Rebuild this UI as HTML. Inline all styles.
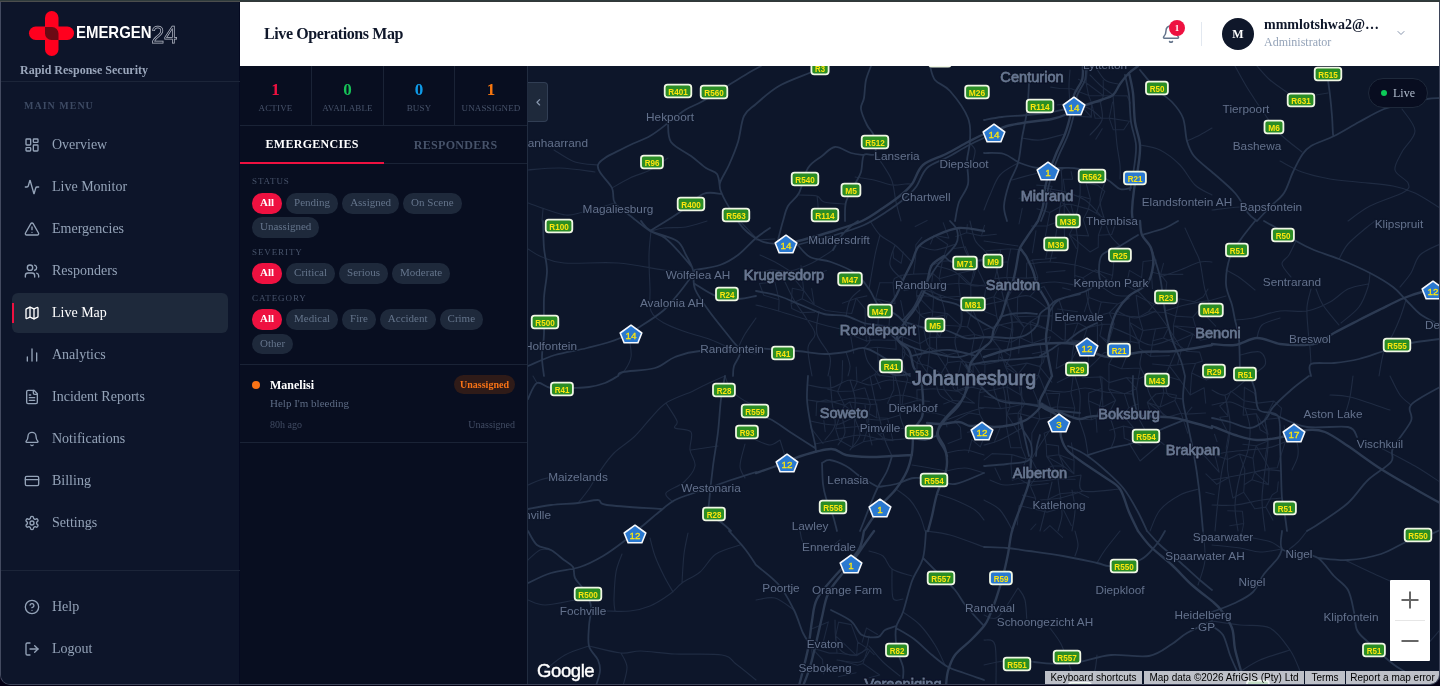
<!DOCTYPE html>
<html lang="en">
<head>
<meta charset="utf-8">
<title>Live Operations Map</title>
<style>
*{box-sizing:border-box;margin:0;padding:0}
html,body{width:1440px;height:686px;overflow:hidden;background:#030014;font-family:"Liberation Serif","Times New Roman",serif;}
#frame{position:absolute;left:0;top:0;width:1440px;height:686px;background:#030014;}
#topbar1{position:absolute;left:0;top:0;width:1440px;height:1px;background:#2f3b3c;}
#topbar2{position:absolute;left:0;top:1px;width:1440px;height:1px;background:linear-gradient(to right,#4b4d4d 0,#4b4d4d 240px,#323838 240px,#323838 100%);}
#win{position:absolute;left:0;top:2px;width:1440px;height:683px;border-left:1px solid #434a60;border-right:1px solid #3d4459;border-bottom:1px solid #3e455a;border-radius:0 0 10px 10px;overflow:hidden;background:#0d152a;}
#app{position:absolute;left:-1px;top:-2px;width:1440px;height:686px;will-change:transform;}
.abs{position:absolute}
#sidebar{position:absolute;left:0;top:0;width:240px;height:686px;background:#0d152a;border-right:1px solid #040920;}
#sidebar .hr{position:absolute;left:0;width:240px;height:1px;background:#1c2539;}
.navi{position:absolute;left:52px;font-size:14px;color:#94a3b8;line-height:18px;white-space:nowrap}
.navicon{position:absolute;left:24px;width:16px;height:16px;stroke:#94a3b8;fill:none;stroke-width:2;stroke-linecap:round;stroke-linejoin:round}
#active{position:absolute;left:12px;top:293px;width:216px;height:40px;background:#1e293b;border-radius:6px;}
#activebar{position:absolute;left:12px;top:303px;width:2px;height:20px;background:#ee1140;}
#header{position:absolute;left:240px;top:0;width:1200px;height:66px;background:#fff;}
#panel{position:absolute;left:240px;top:66px;width:288px;height:620px;background:#080e20;border-right:1px solid #212c40;}
.stat{position:absolute;top:0;height:59px;text-align:center;border-right:1px solid #1a2336}
.stat b{position:absolute;left:0;right:0;top:15px;font-size:17px;line-height:18px;font-weight:bold}
.stat span{position:absolute;left:0;right:0;top:36.5px;font-size:9px;line-height:11px;color:#47536a;letter-spacing:.15px}
.flabel{position:absolute;left:12px;font-size:9px;line-height:10px;letter-spacing:.9px;color:#47536a}
.chip{position:absolute;height:20.5px;border-radius:10.25px;background:#1e293b;color:#64748b;font-size:11px;line-height:16.5px;padding:1px 8px 3px;white-space:nowrap}
.chip.on{background:#ee1140;color:#fff;font-weight:bold}
#map{position:absolute;left:528px;top:66px;width:912px;height:620px;background:#0d162a;overflow:hidden}
.gm{position:absolute;font-family:"Liberation Sans",Arial,sans-serif;font-size:10px;line-height:14px;height:14px;color:#000;background:rgba(245,246,250,.76);white-space:nowrap;text-align:center;top:605px}
</style>
</head>
<body>
<div id="frame">
<div id="topbar1"></div><div id="topbar2"></div>
<div id="win"><div id="app">

<!-- SIDEBAR -->
<div id="sidebar">
  <svg class="abs" style="left:26px;top:8px" width="160" height="52" viewBox="26 8 160 52">
    <g fill="#ff001e">
      <rect x="45" y="11" width="13.5" height="45" rx="6.7"/>
      <rect x="29" y="26.5" width="45" height="13.5" rx="6.7"/>
    </g>
    <path d="M45 27 h7 a6.5 6.5 0 0 1 6.5 6.5 v6.5 h-7 a6.5 6.5 0 0 1 -6.5 -6.5 z" fill="#6b0a14"/>
    <text x="76" y="37.9" font-family="'Liberation Sans',Arial,sans-serif" font-weight="bold" font-size="16.4" fill="#fff" textLength="75.5" lengthAdjust="spacingAndGlyphs">EMERGEN</text>
    <text x="151.3" y="42.9" font-family="'Liberation Sans',Arial,sans-serif" font-size="24" fill="none" stroke="#b4b9c6" stroke-width="0.75" textLength="26" lengthAdjust="spacingAndGlyphs">24</text>
  </svg>
  <div class="abs" style="left:20px;top:63px;font-size:12px;line-height:14px;font-weight:bold;color:#9aa6bb;white-space:nowrap">Rapid Response Security</div>
  <div class="hr" style="top:81px"></div>
  <div class="abs" style="left:24px;top:100px;font-size:10px;line-height:12px;font-weight:bold;letter-spacing:1px;color:#3d4a63;white-space:nowrap">MAIN MENU</div>
  <div id="active"></div><div id="activebar"></div>

  <svg class="navicon" style="top:137px" viewBox="0 0 24 24"><rect x="3" y="3" width="7" height="9" rx="1"/><rect x="14" y="3" width="7" height="5" rx="1"/><rect x="14" y="12" width="7" height="9" rx="1"/><rect x="3" y="16" width="7" height="5" rx="1"/></svg>
  <div class="navi" style="top:136px">Overview</div>

  <svg class="navicon" style="top:179px" viewBox="0 0 24 24"><path d="M22 12h-2.48a2 2 0 0 0-1.93 1.46l-2.35 8.36a.25.25 0 0 1-.48 0L9.24 2.18a.25.25 0 0 0-.48 0l-2.35 8.36A2 2 0 0 1 4.49 12H2"/></svg>
  <div class="navi" style="top:178px">Live Monitor</div>

  <svg class="navicon" style="top:221px" viewBox="0 0 24 24"><path d="m21.73 18-8-14a2 2 0 0 0-3.48 0l-8 14A2 2 0 0 0 4 21h16a2 2 0 0 0 1.73-3"/><path d="M12 9v4"/><path d="M12 17h.01"/></svg>
  <div class="navi" style="top:220px">Emergencies</div>

  <svg class="navicon" style="top:263px" viewBox="0 0 24 24"><path d="M16 21v-2a4 4 0 0 0-4-4H6a4 4 0 0 0-4 4v2"/><circle cx="9" cy="7" r="4"/><path d="M22 21v-2a4 4 0 0 0-3-3.87"/><path d="M16 3.13a4 4 0 0 1 0 7.75"/></svg>
  <div class="navi" style="top:262px">Responders</div>

  <svg class="navicon" style="top:305px;stroke:#fff" viewBox="0 0 24 24"><path d="M14.106 5.553a2 2 0 0 0 1.788 0l3.659-1.83A1 1 0 0 1 21 4.619v12.764a1 1 0 0 1-.553.894l-4.553 2.277a2 2 0 0 1-1.788 0l-4.212-2.106a2 2 0 0 0-1.788 0l-3.659 1.83A1 1 0 0 1 3 19.381V6.618a1 1 0 0 1 .553-.894l4.553-2.277a2 2 0 0 1 1.788 0z"/><path d="M15 5.764v15"/><path d="M9 3.236v15"/></svg>
  <div class="navi" style="top:304px;color:#fff">Live Map</div>

  <svg class="navicon" style="top:347px" viewBox="0 0 24 24"><path d="M5 21v-6"/><path d="M12 21V3"/><path d="M19 21V9"/></svg>
  <div class="navi" style="top:346px">Analytics</div>

  <svg class="navicon" style="top:389px" viewBox="0 0 24 24"><path d="M15 2H6a2 2 0 0 0-2 2v16a2 2 0 0 0 2 2h12a2 2 0 0 0 2-2V7Z"/><path d="M14 2v4a2 2 0 0 0 2 2h4"/><path d="M10 9H8"/><path d="M16 13H8"/><path d="M16 17H8"/></svg>
  <div class="navi" style="top:388px">Incident Reports</div>

  <svg class="navicon" style="top:431px" viewBox="0 0 24 24"><path d="M10.268 21a2 2 0 0 0 3.464 0"/><path d="M3.262 15.326A1 1 0 0 0 4 17h16a1 1 0 0 0 .74-1.673C19.41 13.956 18 12.499 18 8A6 6 0 0 0 6 8c0 4.499-1.411 5.956-2.738 7.326"/></svg>
  <div class="navi" style="top:430px">Notifications</div>

  <svg class="navicon" style="top:473px" viewBox="0 0 24 24"><rect width="20" height="14" x="2" y="5" rx="2"/><line x1="2" x2="22" y1="10" y2="10"/></svg>
  <div class="navi" style="top:472px">Billing</div>

  <svg class="navicon" style="top:515px" viewBox="0 0 24 24"><path d="M12.22 2h-.44a2 2 0 0 0-2 2v.18a2 2 0 0 1-1 1.73l-.43.25a2 2 0 0 1-2 0l-.15-.08a2 2 0 0 0-2.73.73l-.22.38a2 2 0 0 0 .73 2.73l.15.1a2 2 0 0 1 1 1.72v.51a2 2 0 0 1-1 1.74l-.15.09a2 2 0 0 0-.73 2.73l.22.38a2 2 0 0 0 2.73.73l.15-.08a2 2 0 0 1 2 0l.43.25a2 2 0 0 1 1 1.73V20a2 2 0 0 0 2 2h.44a2 2 0 0 0 2-2v-.18a2 2 0 0 1 1-1.73l.43-.25a2 2 0 0 1 2 0l.15.08a2 2 0 0 0 2.73-.73l.22-.39a2 2 0 0 0-.73-2.73l-.15-.08a2 2 0 0 1-1-1.74v-.5a2 2 0 0 1 1-1.74l.15-.09a2 2 0 0 0 .73-2.73l-.22-.38a2 2 0 0 0-2.73-.73l-.15.08a2 2 0 0 1-2 0l-.43-.25a2 2 0 0 1-1-1.73V4a2 2 0 0 0-2-2z"/><circle cx="12" cy="12" r="3"/></svg>
  <div class="navi" style="top:514px">Settings</div>

  <div class="hr" style="top:570px"></div>

  <svg class="navicon" style="top:599px" viewBox="0 0 24 24"><circle cx="12" cy="12" r="10"/><path d="M9.09 9a3 3 0 0 1 5.83 1c0 2-3 3-3 3"/><path d="M12 17h.01"/></svg>
  <div class="navi" style="top:598px">Help</div>

  <svg class="navicon" style="top:641px" viewBox="0 0 24 24"><path d="M9 21H5a2 2 0 0 1-2-2V5a2 2 0 0 1 2-2h4"/><polyline points="16 17 21 12 16 7"/><line x1="21" x2="9" y1="12" y2="12"/></svg>
  <div class="navi" style="top:640px">Logout</div>
</div>

<!-- HEADER -->
<div id="header">
  <div class="abs" style="left:24px;top:24px;font-size:16px;line-height:20px;font-weight:bold;letter-spacing:-.4px;color:#0f172a;white-space:nowrap">Live Operations Map</div>
  <svg class="abs" style="left:921px;top:24px;fill:none;stroke:#64748b;stroke-width:1.8;stroke-linecap:round;stroke-linejoin:round" width="20" height="20" viewBox="0 0 24 24"><path d="M10.268 21a2 2 0 0 0 3.464 0"/><path d="M3.262 15.326A1 1 0 0 0 4 17h16a1 1 0 0 0 .74-1.673C19.41 13.956 18 12.499 18 8A6 6 0 0 0 6 8c0 4.499-1.411 5.956-2.738 7.326"/></svg>
  <div class="abs" style="left:929px;top:20px;width:16px;height:16px;border-radius:8px;background:#ee1140;color:#fff;font-size:9px;line-height:16px;font-weight:bold;text-align:center">1</div>
  <div class="abs" style="left:961px;top:22px;width:1px;height:24px;background:#e2e8f0"></div>
  <div class="abs" style="left:982px;top:18px;width:32px;height:32px;border-radius:16px;background:#0f172a;color:#fff;font-size:12px;line-height:32px;font-weight:bold;text-align:center">M</div>
  <div class="abs" style="left:1024px;top:16px;font-size:14px;line-height:17px;font-weight:bold;color:#0f172a;white-space:nowrap">mmmlotshwa2@…</div>
  <div class="abs" style="left:1024px;top:34.5px;font-size:12px;line-height:14px;color:#94a3b8;white-space:nowrap">Administrator</div>
  <svg class="abs" style="left:1155px;top:27px;fill:none;stroke:#8593ab;stroke-width:2;stroke-linecap:round;stroke-linejoin:round" width="12" height="12" viewBox="0 0 24 24"><path d="m6 9 6 6 6-6"/></svg>
</div>

<!-- PANEL -->
<div id="panel">
  <div class="stat" style="left:0;width:72px"><b style="color:#ee1140">1</b><span>ACTIVE</span></div>
  <div class="stat" style="left:72px;width:72px"><b style="color:#16c157">0</b><span>AVAILABLE</span></div>
  <div class="stat" style="left:144px;width:71px"><b style="color:#0f9be8">0</b><span>BUSY</span></div>
  <div class="stat" style="left:215px;width:72px;border-right:none"><b style="color:#f6760f">1</b><span>UNASSIGNED</span></div>
  <div class="abs" style="left:0;top:59px;width:287px;height:1px;background:#1a2336"></div>

  <div class="abs" style="left:0;top:60px;width:144px;height:36px;text-align:center;font-size:12px;line-height:36px;font-weight:bold;color:#fff;letter-spacing:.3px;text-indent:.3px">EMERGENCIES</div>
  <div class="abs" style="left:144px;top:61px;width:143px;height:36px;text-align:center;font-size:12px;line-height:36px;font-weight:bold;color:#47536a;letter-spacing:.3px;text-indent:.3px">RESPONDERS</div>
  <div class="abs" style="left:0;top:97px;width:287px;height:1px;background:#1a2336"></div>
  <div class="abs" style="left:0;top:96px;width:144px;height:2px;background:#ee1140"></div>

  <div class="flabel" style="top:110.25px">STATUS</div>
  <div class="abs" style="left:12px;top:127px;display:flex;gap:4px"><div class="chip on" style="position:static">All</div><div class="chip" style="position:static">Pending</div><div class="chip" style="position:static">Assigned</div><div class="chip" style="position:static">On Scene</div></div>
  <div class="abs" style="left:12px;top:151px;display:flex;gap:4px"><div class="chip" style="position:static">Unassigned</div></div>

  <div class="flabel" style="top:181px">SEVERITY</div>
  <div class="abs" style="left:12px;top:197px;display:flex;gap:4px"><div class="chip on" style="position:static">All</div><div class="chip" style="position:static">Critical</div><div class="chip" style="position:static">Serious</div><div class="chip" style="position:static">Moderate</div></div>

  <div class="flabel" style="top:227.25px">CATEGORY</div>
  <div class="abs" style="left:12px;top:243px;display:flex;gap:4px"><div class="chip on" style="position:static">All</div><div class="chip" style="position:static">Medical</div><div class="chip" style="position:static">Fire</div><div class="chip" style="position:static">Accident</div><div class="chip" style="position:static">Crime</div></div>
  <div class="abs" style="left:12px;top:267.5px;display:flex;gap:4px"><div class="chip" style="position:static">Other</div></div>

  <div class="abs" style="left:0;top:298px;width:287px;height:1px;background:#1a2336"></div>
  <div class="abs" style="left:12px;top:315px;width:8px;height:8px;border-radius:4px;background:#f97316"></div>
  <div class="abs" style="left:30px;top:311px;font-size:12px;line-height:16px;font-weight:bold;color:#fff;white-space:nowrap">Manelisi</div>
  <div class="abs" style="left:214px;top:309px;width:61px;height:19px;border-radius:9.5px;background:#2f1b18;color:#f97316;font-size:10px;line-height:19px;font-weight:bold;text-align:center">Unassigned</div>
  <div class="abs" style="left:30px;top:330px;font-size:11px;line-height:14px;color:#5d6b84;white-space:nowrap">Help I'm bleeding</div>
  <div class="abs" style="left:30px;top:353px;font-size:10px;line-height:12px;color:#414c63;white-space:nowrap">80h ago</div>
  <div class="abs" style="right:12px;top:353px;font-size:10px;line-height:12px;color:#414c63;white-space:nowrap">Unassigned</div>
  <div class="abs" style="left:0;top:376px;width:287px;height:1px;background:#1a2336"></div>
</div>

<div id="map">
<svg class="abs" style="left:0;top:0" width="912" height="620" viewBox="528 66 912 620">
<rect x="528" y="66" width="912" height="620" fill="#0d162a"/>
<path d="M759.4 283.5L774.9 282.2 M759.4 283.5L763.8 295.2 M763.8 295.2L779.1 299.8 M774.9 282.2L779.1 299.8 M779.1 299.8L778.7 310.7 M792.6 276.7L803.8 290.7 M792.3 288.3L803.8 290.7 M792.3 288.3L791.1 303.8 M791.1 303.8L802.1 298.8 M791.1 303.8L791.8 308.4 M791.8 308.4L800.5 312.6 M801.0 265.6L801.7 273.2 M801.7 273.2L814.0 274.5 M801.7 273.2L803.8 290.7 M803.8 290.7L802.1 298.8 M803.8 290.7L814.3 304.9 M802.1 298.8L814.3 304.9 M800.5 312.6L814.7 312.1 M814.0 274.5L826.5 270.4 M811.7 288.5L814.3 304.9 M814.3 304.9L825.7 310.5 M816.7 402.2L825.9 399.9 M816.7 402.2L816.1 415.6 M810.7 427.7L823.1 443.6 M812.1 628.7L828.3 621.9 M813.8 640.9L811.5 647.8 M811.5 647.8L829.3 653.1 M811.5 647.8L812.6 660.9 M811.5 647.8L822.5 659.5 M825.7 310.5L841.3 312.5 M827.7 389.1L837.6 391.5 M825.9 399.9L844.6 405.4 M823.8 420.5L825.2 431.6 M828.3 621.9L823.2 642.1 M829.3 653.1L837.0 653.0 M822.5 659.5L823.7 674.0 M842.4 303.3L856.2 298.2 M841.3 312.5L851.7 313.5 M842.6 360.5L842.0 381.0 M842.0 381.0L837.6 391.5 M837.6 391.5L852.9 391.0 M837.6 391.5L844.6 405.4 M844.6 405.4L849.6 402.0 M844.6 405.4L840.4 414.5 M844.6 405.4L853.8 412.9 M840.4 414.5L853.8 412.9 M840.4 414.5L835.6 428.6 M835.6 428.6L854.9 426.7 M835.6 428.6L839.1 440.0 M839.1 440.0L852.4 447.6 M838.6 622.1L851.3 624.6 M838.6 622.1L835.7 635.8 M835.7 635.8L837.0 653.0 M835.7 635.8L856.6 655.7 M837.0 653.0L856.6 655.7 M839.5 660.2L857.6 665.2 M838.3 676.7L856.1 672.7 M856.3 276.4L863.3 274.7 M856.2 298.2L866.9 295.9 M856.2 298.2L851.7 313.5 M856.2 298.2L865.1 308.8 M851.7 329.3L865.4 329.6 M850.4 334.5L866.5 341.1 M850.4 334.5L853.7 353.3 M856.2 367.0L857.0 382.4 M857.0 382.4L852.9 391.0 M852.9 391.0L864.9 387.8 M849.6 402.0L870.5 404.6 M849.6 402.0L853.8 412.9 M853.8 412.9L868.7 413.4 M853.8 412.9L854.9 426.7 M854.9 426.7L868.7 425.6 M854.9 426.7L852.4 447.6 M852.4 447.6L863.4 441.7 M851.3 624.6L857.7 642.0 M857.7 642.0L856.6 655.7 M857.7 642.0L867.7 648.6 M856.6 655.7L867.7 648.6 M857.6 665.2L863.0 663.5 M865.1 308.8L865.4 329.6 M865.4 329.6L877.9 324.6 M865.4 329.6L866.5 341.1 M866.5 341.1L874.1 339.8 M868.5 348.2L877.4 347.3 M862.1 381.3L874.5 374.5 M864.9 387.8L870.5 404.6 M870.5 404.6L876.8 404.0 M870.5 404.6L868.7 413.4 M868.7 413.4L876.6 417.7 M868.7 413.4L868.7 425.6 M868.7 425.6L879.3 434.5 M868.7 425.6L863.4 441.7 M863.4 441.7L883.9 438.4 M866.5 628.0L862.2 642.2 M866.5 628.0L877.5 634.4 M867.7 648.6L874.1 654.7 M867.7 648.6L863.0 663.5 M863.0 663.5L879.7 675.0 M869.3 677.8L879.7 675.0 M879.9 282.5L893.0 282.8 M879.9 282.5L875.7 298.6 M875.7 298.6L895.1 303.7 M875.7 298.6L878.7 313.8 M875.7 298.6L890.4 309.4 M878.7 313.8L877.9 324.6 M877.9 324.6L888.9 326.4 M874.1 339.8L895.7 340.4 M877.4 347.3L896.2 349.2 M877.4 347.3L878.6 369.8 M878.6 369.8L890.3 367.5 M878.6 369.8L874.5 374.5 M874.5 374.5L893.5 377.1 M874.5 374.5L880.7 388.8 M876.8 404.0L876.6 417.7 M876.6 417.7L887.5 418.2 M879.3 434.5L890.4 429.9 M879.3 434.5L883.9 438.4 M883.9 438.4L893.0 440.6 M893.0 251.6L893.5 258.0 M893.5 258.0L901.1 263.3 M894.3 278.6L900.7 275.4 M894.3 278.6L893.0 282.8 M893.0 282.8L895.1 303.7 M890.4 309.4L888.9 326.4 M888.9 326.4L909.4 327.3 M888.9 326.4L895.7 340.4 M895.7 340.4L896.2 349.2 M890.3 367.5L902.3 362.1 M890.3 367.5L893.5 377.1 M893.5 377.1L893.8 389.4 M893.8 389.4L887.6 403.2 M887.6 403.2L902.2 404.7 M887.5 418.2L890.4 429.9 M890.4 429.9L908.6 427.7 M890.4 429.9L893.0 440.6 M903.3 252.0L901.1 263.3 M900.7 275.4L913.5 274.1 M900.7 275.4L904.0 290.6 M904.0 290.6L917.1 287.6 M900.7 300.6L904.1 317.1 M904.1 317.1L909.4 327.3 M909.4 327.3L918.4 326.5 M909.4 327.3L902.3 336.5 M902.3 336.5L919.9 343.8 M902.3 336.5L902.7 351.3 M902.7 351.3L902.3 362.1 M902.7 351.3L917.0 363.2 M902.3 362.1L907.6 379.4 M907.6 379.4L903.0 395.9 M903.0 395.9L902.2 404.7 M902.2 404.7L917.1 400.5 M915.2 226.6L927.1 220.6 M921.8 237.3L915.8 244.8 M915.8 244.8L915.7 256.7 M915.7 256.7L913.5 274.1 M913.5 274.1L932.9 273.5 M917.1 287.6L930.8 289.9 M917.1 287.6L916.6 295.2 M916.6 295.2L933.6 296.5 M916.6 295.2L919.9 314.5 M916.6 295.2L932.8 311.7 M919.9 314.5L932.8 311.7 M919.9 314.5L918.4 326.5 M918.4 326.5L919.9 343.8 M919.9 343.8L929.7 337.4 M919.9 343.8L921.7 354.2 M921.7 354.2L929.8 347.2 M921.7 354.2L917.0 363.2 M917.0 363.2L928.0 365.7 M917.0 363.2L917.2 382.7 M916.9 389.9L933.2 388.8 M916.9 389.9L917.1 400.5 M917.1 400.5L929.3 401.4 M922.9 412.1L934.3 413.0 M919.1 434.2L932.3 433.5 M934.0 235.2L948.9 238.1 M934.0 235.2L930.5 243.9 M934.0 235.2L947.7 244.5 M930.0 265.9L942.4 261.2 M932.9 273.5L939.1 278.8 M932.9 273.5L930.8 289.9 M930.8 289.9L933.6 296.5 M930.8 289.9L942.2 297.6 M933.6 296.5L942.2 297.6 M933.6 296.5L932.8 311.7 M932.8 311.7L947.5 313.6 M932.8 311.7L931.2 323.4 M931.2 323.4L944.1 325.2 M931.2 323.4L929.7 337.4 M931.2 323.4L939.6 337.1 M929.7 337.4L939.6 337.1 M929.7 337.4L929.8 347.2 M929.8 347.2L947.6 355.0 M929.8 347.2L928.0 365.7 M928.0 365.7L926.6 374.8 M928.0 365.7L941.1 373.6 M926.6 374.8L941.1 373.6 M933.2 388.8L944.4 389.8 M934.3 413.0L944.8 415.7 M943.2 222.8L948.9 238.1 M947.7 244.5L942.4 261.2 M942.4 261.2L953.0 260.6 M942.4 261.2L939.1 278.8 M939.1 278.8L959.3 273.3 M939.1 278.8L941.8 284.7 M941.8 284.7L958.8 283.2 M942.2 297.6L960.2 296.3 M947.5 313.6L944.1 325.2 M947.5 313.6L961.3 326.3 M944.1 325.2L961.3 326.3 M944.1 325.2L939.6 337.1 M939.6 337.1L954.9 337.5 M947.6 355.0L959.5 352.0 M947.6 355.0L947.5 362.6 M947.5 362.6L961.2 361.0 M947.5 362.6L941.1 373.6 M941.1 373.6L956.8 381.6 M941.1 373.6L944.4 389.8 M944.4 389.8L958.0 391.4 M944.4 389.8L952.9 400.4 M943.6 403.9L952.9 400.4 M944.8 415.7L947.0 427.0 M948.1 443.6L961.2 438.4 M955.8 236.4L966.6 232.7 M954.3 248.5L965.4 246.9 M953.0 260.6L970.2 258.9 M959.3 273.3L973.9 269.9 M959.3 273.3L958.8 283.2 M959.3 273.3L970.8 284.4 M958.8 283.2L970.8 284.4 M958.8 283.2L960.2 296.3 M960.2 296.3L961.2 317.9 M961.2 317.9L961.3 326.3 M961.3 326.3L967.5 327.0 M961.3 326.3L954.9 337.5 M954.9 337.5L974.8 334.5 M959.5 352.0L971.2 353.9 M961.2 361.0L973.1 363.4 M961.2 361.0L956.8 381.6 M961.2 361.0L973.1 377.6 M956.8 381.6L958.0 391.4 M958.0 391.4L974.2 386.2 M958.0 391.4L974.4 403.1 M952.9 400.4L974.4 403.1 M954.7 420.9L969.1 412.9 M954.7 420.9L960.4 427.3 M960.4 427.3L961.2 438.4 M967.3 224.5L966.6 232.7 M966.6 232.7L981.4 235.9 M965.4 246.9L970.2 258.9 M970.2 258.9L973.9 269.9 M973.9 269.9L970.8 284.4 M970.8 284.4L986.1 286.2 M970.8 284.4L970.9 302.8 M970.9 302.8L984.0 299.6 M970.9 302.8L972.1 308.7 M972.1 308.7L967.5 327.0 M972.1 308.7L981.6 329.4 M967.5 327.0L974.8 334.5 M974.8 334.5L984.2 336.9 M974.8 334.5L971.2 353.9 M971.2 353.9L978.9 349.7 M971.2 353.9L973.1 363.4 M973.1 363.4L985.0 364.4 M973.1 363.4L973.1 377.6 M973.1 363.4L984.6 381.0 M973.1 377.6L984.6 381.0 M969.1 412.9L979.9 414.7 M967.5 432.3L987.5 428.6 M971.8 439.6L980.3 446.9 M971.8 439.6L968.5 452.4 M984.5 225.3L981.4 235.9 M981.4 235.9L996.4 234.2 M986.3 250.9L1000.7 249.5 M978.1 260.9L999.0 262.7 M978.1 260.9L978.2 270.2 M978.2 270.2L986.1 286.2 M986.1 286.2L998.1 288.9 M986.1 286.2L984.0 299.6 M984.0 299.6L993.8 296.7 M981.4 310.2L996.7 316.2 M981.6 329.4L984.2 336.9 M984.2 336.9L992.4 339.2 M984.2 336.9L978.9 349.7 M978.9 349.7L999.7 348.7 M978.9 349.7L985.0 364.4 M985.0 364.4L998.4 361.7 M985.0 364.4L984.6 381.0 M984.6 381.0L979.3 392.8 M979.3 392.8L994.0 389.8 M979.3 392.8L978.5 407.2 M978.5 407.2L1000.6 408.6 M978.5 407.2L979.9 414.7 M979.9 414.7L987.5 428.6 M987.5 428.6L1000.4 427.0 M987.5 428.6L980.3 446.9 M984.1 459.9L992.1 453.6 M1000.7 249.5L1010.7 248.8 M1000.7 249.5L999.0 262.7 M999.0 262.7L1008.0 261.7 M999.0 262.7L994.8 278.6 M994.8 278.6L1006.8 277.4 M998.1 288.9L1011.9 290.3 M998.1 288.9L993.8 296.7 M993.8 296.7L1005.6 301.7 M993.8 296.7L996.7 316.2 M996.7 316.2L998.9 324.5 M998.9 324.5L1012.9 329.9 M998.9 324.5L992.4 339.2 M992.4 339.2L1011.4 342.2 M992.4 339.2L999.7 348.7 M999.7 348.7L1010.5 355.7 M999.7 348.7L998.4 361.7 M999.7 348.7L1005.4 367.0 M994.1 373.6L1011.0 379.1 M994.1 373.6L994.0 389.8 M994.0 389.8L1006.8 386.7 M994.0 389.8L1000.6 408.6 M1000.6 408.6L1010.0 407.2 M1000.4 427.0L1006.3 426.0 M1000.4 427.0L994.2 442.4 M992.1 453.6L1012.0 454.6 M995.0 467.9L1000.6 479.7 M1010.7 248.8L1022.6 250.0 M1010.7 248.8L1008.0 261.7 M1008.0 261.7L1006.8 277.4 M1006.8 277.4L1026.4 278.1 M1006.8 277.4L1011.9 290.3 M1011.9 290.3L1024.2 289.2 M1011.9 290.3L1005.6 301.7 M1005.6 301.7L1011.5 313.0 M1011.5 313.0L1017.2 316.6 M1011.5 313.0L1012.9 329.9 M1011.5 313.0L1024.2 327.3 M1012.9 329.9L1011.4 342.2 M1011.4 342.2L1019.7 337.6 M1011.4 342.2L1010.5 355.7 M1010.5 355.7L1005.4 367.0 M1005.4 367.0L1026.9 363.1 M1005.4 367.0L1011.0 379.1 M1005.4 367.0L1017.5 374.8 M1011.0 379.1L1006.8 386.7 M1006.8 386.7L1020.6 394.9 M1006.8 386.7L1010.0 407.2 M1010.0 407.2L1025.0 403.6 M1010.0 407.2L1006.8 414.2 M1006.8 414.2L1018.1 413.1 M1006.8 414.2L1006.3 426.0 M1006.8 414.2L1018.6 432.7 M1006.3 426.0L1010.7 447.7 M1010.7 447.7L1021.7 447.8 M1012.0 454.6L1026.1 458.9 M1012.0 454.6L1011.0 464.8 M1011.0 464.8L1012.3 480.3 M1012.3 480.3L1018.3 478.1 M1019.0 198.3L1032.4 197.5 M1022.2 208.4L1019.0 224.0 M1026.7 263.4L1032.3 259.9 M1026.7 263.4L1026.4 278.1 M1026.4 278.1L1037.8 277.2 M1024.2 289.2L1017.7 297.1 M1017.7 297.1L1017.2 316.6 M1017.2 316.6L1039.7 316.0 M1017.2 316.6L1024.2 327.3 M1024.2 327.3L1030.4 321.5 M1024.2 327.3L1019.7 337.6 M1019.7 337.6L1032.4 343.3 M1019.7 337.6L1018.7 353.3 M1026.9 363.1L1039.3 366.4 M1026.9 363.1L1017.5 374.8 M1017.5 374.8L1039.1 375.7 M1017.5 374.8L1020.6 394.9 M1020.6 394.9L1025.0 403.6 M1025.0 403.6L1018.1 413.1 M1018.1 413.1L1039.7 419.1 M1018.1 413.1L1018.6 432.7 M1018.6 432.7L1021.7 447.8 M1021.7 447.8L1026.1 458.9 M1026.1 458.9L1031.1 458.8 M1026.1 458.9L1021.8 472.2 M1021.8 472.2L1038.8 473.1 M1018.3 478.1L1030.1 485.5 M1022.6 495.1L1035.6 498.2 M1019.1 505.5L1035.0 509.2 M1019.1 505.5L1017.3 525.0 M1036.7 185.1L1052.1 186.3 M1032.4 197.5L1050.1 191.4 M1036.9 208.7L1049.8 212.5 M1031.5 226.0L1047.3 225.7 M1036.0 230.7L1032.4 252.8 M1032.3 259.9L1045.6 259.0 M1032.3 259.9L1037.8 277.2 M1037.8 277.2L1036.3 289.4 M1036.3 289.4L1044.0 286.4 M1036.3 289.4L1030.4 296.0 M1039.7 316.0L1052.3 315.6 M1039.7 316.0L1030.4 321.5 M1030.4 321.5L1051.3 330.9 M1030.4 321.5L1032.4 343.3 M1032.4 343.3L1050.5 336.8 M1032.2 353.7L1045.5 351.1 M1039.3 366.4L1043.3 362.3 M1039.3 366.4L1051.8 382.2 M1039.1 375.7L1031.6 386.2 M1039.1 375.7L1046.3 393.7 M1031.6 386.2L1037.5 400.1 M1037.5 400.1L1050.7 407.9 M1037.5 400.1L1039.7 419.1 M1039.7 419.1L1050.9 417.3 M1039.7 419.1L1031.9 433.0 M1031.9 433.0L1031.7 443.1 M1031.7 443.1L1031.1 458.8 M1031.1 458.8L1038.8 473.1 M1038.8 473.1L1052.6 465.7 M1038.8 473.1L1030.1 485.5 M1030.1 485.5L1048.3 483.5 M1030.1 485.5L1035.6 498.2 M1035.6 498.2L1035.0 509.2 M1035.0 509.2L1047.1 512.1 M1035.9 524.0L1030.8 529.6 M1050.7 87.1L1059.6 88.5 M1050.3 172.9L1062.9 169.5 M1052.1 186.3L1050.1 191.4 M1050.1 191.4L1065.3 194.4 M1050.1 191.4L1064.3 204.4 M1049.8 212.5L1064.3 204.4 M1049.8 212.5L1047.3 225.7 M1047.3 225.7L1064.2 219.3 M1047.3 225.7L1044.8 239.4 M1047.4 250.0L1045.6 259.0 M1045.6 259.0L1056.2 257.9 M1046.5 272.3L1065.0 270.6 M1044.0 286.4L1052.8 301.5 M1052.8 301.5L1052.3 315.6 M1052.3 315.6L1051.3 330.9 M1051.3 330.9L1062.5 339.7 M1050.5 336.8L1045.5 351.1 M1045.5 351.1L1043.3 362.3 M1046.3 393.7L1059.7 393.2 M1046.3 393.7L1050.7 407.9 M1050.7 407.9L1057.4 406.8 M1050.7 407.9L1050.9 417.3 M1044.1 433.2L1061.2 426.2 M1044.1 433.2L1046.2 444.3 M1046.2 444.3L1058.5 445.9 M1046.2 444.3L1046.7 456.4 M1046.7 456.4L1058.9 454.8 M1046.7 456.4L1052.6 465.7 M1046.7 456.4L1063.6 466.3 M1052.6 465.7L1063.6 466.3 M1052.6 465.7L1058.0 479.2 M1048.4 499.3L1059.9 493.7 M1047.1 512.1L1062.4 507.7 M1049.9 525.6L1043.9 531.2 M1049.9 525.6L1062.6 537.3 M1059.6 88.5L1071.4 88.7 M1057.2 104.9L1077.6 102.2 M1063.3 179.0L1072.6 179.2 M1063.3 179.0L1065.3 194.4 M1065.3 194.4L1064.3 204.4 M1064.3 204.4L1070.8 204.2 M1064.3 204.4L1064.2 219.3 M1064.3 204.4L1075.5 222.1 M1064.2 219.3L1075.5 222.1 M1064.2 219.3L1064.5 238.0 M1064.5 238.0L1062.7 245.8 M1062.6 287.9L1070.5 290.0 M1057.5 309.0L1077.5 311.7 M1065.8 324.8L1078.0 322.9 M1062.5 339.7L1071.3 340.0 M1058.3 347.7L1056.2 368.5 M1056.2 368.5L1071.2 360.4 M1057.3 382.6L1073.4 374.4 M1059.7 393.2L1057.4 406.8 M1057.4 406.8L1074.8 408.3 M1057.4 406.8L1058.5 415.7 M1058.5 415.7L1061.2 426.2 M1058.5 445.9L1058.9 454.8 M1058.9 454.8L1074.1 460.4 M1058.9 454.8L1063.6 466.3 M1058.9 454.8L1073.9 473.9 M1063.6 466.3L1073.9 473.9 M1063.6 466.3L1058.0 479.2 M1058.0 479.2L1075.2 479.2 M1058.0 479.2L1059.9 493.7 M1059.9 493.7L1077.3 492.1 M1059.9 493.7L1062.4 507.7 M1062.4 507.7L1071.3 525.6 M1078.4 79.2L1086.1 82.8 M1071.4 88.7L1088.6 95.6 M1077.6 102.2L1091.4 117.1 M1069.9 115.7L1091.4 117.1 M1071.1 171.6L1072.6 179.2 M1078.8 195.8L1090.4 199.0 M1070.8 204.2L1088.5 209.1 M1070.8 204.2L1075.5 222.1 M1075.5 222.1L1069.3 234.7 M1069.3 234.7L1088.6 235.9 M1069.3 234.7L1076.4 248.4 M1069.3 234.7L1090.0 251.9 M1075.0 275.5L1082.8 277.9 M1078.0 322.9L1087.2 327.8 M1078.0 322.9L1071.3 340.0 M1071.3 340.0L1082.8 341.4 M1071.3 340.0L1078.0 347.9 M1078.0 347.9L1071.2 360.4 M1071.2 360.4L1073.4 374.4 M1073.4 374.4L1071.0 393.5 M1071.0 393.5L1074.8 408.3 M1074.8 408.3L1073.0 418.8 M1073.0 418.8L1091.5 419.8 M1071.4 442.8L1074.1 460.4 M1074.1 460.4L1073.9 473.9 M1077.3 492.1L1088.6 497.6 M1087.8 65.5L1086.1 82.8 M1086.1 82.8L1088.6 95.6 M1086.1 82.8L1103.5 95.7 M1088.6 95.6L1103.5 95.7 M1088.6 95.6L1091.5 102.7 M1091.5 102.7L1100.9 102.0 M1091.5 102.7L1091.4 117.1 M1091.5 102.7L1095.2 118.3 M1086.2 183.3L1097.7 185.1 M1086.2 183.3L1090.4 199.0 M1090.4 199.0L1088.5 209.1 M1088.5 209.1L1096.2 213.3 M1088.5 209.1L1083.2 219.5 M1083.2 219.5L1088.6 235.9 M1090.0 251.9L1098.2 247.2 M1082.8 277.9L1095.6 269.9 M1082.8 277.9L1087.7 283.9 M1087.7 283.9L1088.9 297.6 M1088.9 297.6L1101.2 301.9 M1088.9 297.6L1084.4 311.7 M1087.2 327.8L1102.3 324.4 M1087.2 327.8L1082.8 341.4 M1082.8 341.4L1088.2 351.7 M1088.2 351.7L1088.7 368.0 M1088.7 368.0L1095.6 361.6 M1082.2 377.8L1101.9 376.9 M1088.8 393.1L1102.1 388.3 M1088.8 393.1L1088.5 400.8 M1088.5 400.8L1102.9 407.0 M1088.5 400.8L1091.5 419.8 M1091.5 419.8L1096.0 417.9 M1103.2 80.0L1103.5 95.7 M1103.5 95.7L1117.3 95.7 M1103.5 95.7L1100.9 102.0 M1095.2 118.3L1109.2 118.1 M1102.2 128.8L1095.8 139.1 M1097.7 185.1L1104.8 191.3 M1104.8 191.3L1096.2 213.3 M1096.2 213.3L1104.6 218.5 M1104.6 218.5L1098.4 235.2 M1098.4 235.2L1111.7 234.5 M1098.4 235.2L1098.2 247.2 M1095.6 269.9L1112.6 275.4 M1095.6 269.9L1110.8 282.4 M1096.7 283.0L1110.8 282.4 M1101.2 301.9L1117.8 304.0 M1101.2 301.9L1097.7 315.9 M1097.7 315.9L1109.3 312.7 M1097.7 315.9L1102.3 324.4 M1102.3 324.4L1114.2 324.0 M1102.3 324.4L1099.9 335.9 M1099.9 335.9L1108.7 341.5 M1099.9 335.9L1115.7 351.4 M1104.2 352.6L1115.7 351.4 M1104.2 352.6L1095.6 361.6 M1101.9 376.9L1109.0 382.6 M1101.9 376.9L1102.1 388.3 M1102.1 388.3L1102.9 407.0 M1102.9 407.0L1115.6 400.4 M1096.0 417.9L1097.0 432.1 M1117.3 95.7L1127.1 95.9 M1112.6 102.0L1109.2 118.1 M1109.2 118.1L1129.4 121.2 M1109.2 118.1L1113.2 129.6 M1113.2 129.6L1123.7 129.7 M1115.1 224.7L1111.7 234.5 M1114.2 257.1L1112.6 275.4 M1112.6 275.4L1110.8 282.4 M1117.8 304.0L1129.2 298.5 M1117.8 304.0L1109.3 312.7 M1109.3 312.7L1129.4 316.4 M1109.3 312.7L1114.2 324.0 M1114.2 324.0L1108.7 341.5 M1108.7 341.5L1130.3 341.4 M1115.7 351.4L1127.7 353.5 M1115.7 351.4L1108.9 364.0 M1108.9 364.0L1121.5 368.7 M1108.9 364.0L1109.0 382.6 M1109.0 382.6L1126.5 377.6 M1109.0 382.6L1108.6 388.9 M1108.6 388.9L1124.4 393.8 M1108.6 388.9L1115.6 400.4 M1115.6 400.4L1109.1 412.8 M1109.7 430.3L1123.5 426.1 M1127.1 95.9L1130.5 103.3 M1129.4 121.2L1123.7 129.7 M1129.4 270.4L1141.6 277.6 M1129.4 270.4L1126.4 285.4 M1126.4 285.4L1137.6 291.2 M1129.4 316.4L1139.0 316.9 M1129.4 316.4L1129.7 322.4 M1129.7 322.4L1143.0 330.5 M1129.7 322.4L1130.3 341.4 M1129.7 322.4L1139.1 343.3 M1130.3 341.4L1139.1 343.3 M1130.3 341.4L1127.7 353.5 M1127.7 353.5L1121.5 368.7 M1121.5 368.7L1140.3 368.0 M1126.5 377.6L1138.2 379.0 M1126.5 377.6L1136.6 388.8 M1124.4 393.8L1136.6 388.8 M1124.4 393.8L1128.8 407.7 M1128.8 407.7L1138.2 404.1 M1128.8 407.7L1123.2 415.4 M1123.2 415.4L1138.7 413.0 M1123.2 415.4L1134.1 428.4 M1123.5 426.1L1134.1 428.4 M1123.5 426.1L1124.3 438.3 M1124.3 438.3L1141.1 445.5 M1143.1 261.5L1156.2 260.0 M1143.1 261.5L1141.6 277.6 M1136.1 295.3L1154.3 304.4 M1136.1 295.3L1139.0 316.9 M1139.0 316.9L1148.5 311.7 M1139.0 316.9L1143.0 330.5 M1143.0 330.5L1155.5 328.9 M1143.0 330.5L1139.1 343.3 M1139.1 343.3L1139.6 348.5 M1139.6 348.5L1150.4 356.4 M1140.3 368.0L1138.2 379.0 M1138.2 379.0L1148.9 374.2 M1138.2 379.0L1136.6 388.8 M1136.6 388.8L1138.2 404.1 M1138.2 404.1L1138.7 413.0 M1156.2 260.0L1151.3 272.0 M1151.3 272.0L1160.6 274.3 M1151.3 272.0L1152.5 288.6 M1154.3 304.4L1164.4 302.9 M1154.3 304.4L1148.5 311.7 M1148.5 311.7L1165.7 312.5 M1155.5 328.9L1168.8 327.0 M1155.5 328.9L1152.9 340.8 M1152.9 340.8L1163.4 338.0 M1152.9 340.8L1150.4 356.4 M1150.4 356.4L1169.4 355.6 M1152.5 364.0L1169.1 365.6 M1148.9 374.2L1161.5 374.8 M1155.9 394.0L1163.8 392.9 M1155.9 394.0L1147.3 402.3 M1147.3 402.3L1160.1 407.0 M1147.3 402.3L1151.8 417.0 M1147.3 402.3L1167.8 417.1 M1150.7 433.9L1164.2 444.7 M1163.5 263.3L1160.6 274.3 M1160.6 274.3L1182.8 274.4 M1160.6 274.3L1166.8 282.4 M1166.8 282.4L1164.4 302.9 M1164.4 302.9L1179.4 298.8 M1164.4 302.9L1165.7 312.5 M1165.7 312.5L1175.5 316.1 M1168.8 327.0L1163.4 338.0 M1163.4 338.0L1173.9 342.5 M1169.1 365.6L1177.6 364.7 M1169.1 365.6L1180.2 380.3 M1161.5 374.8L1180.2 380.3 M1161.5 374.8L1163.8 392.9 M1163.8 392.9L1176.5 395.3 M1163.8 392.9L1160.1 407.0 M1160.1 407.0L1174.9 400.4 M1167.8 417.1L1181.1 413.2 M1179.4 298.8L1194.3 301.7 M1179.4 298.8L1175.5 316.1 M1175.5 316.1L1192.8 317.2 M1175.5 316.1L1173.4 325.8 M1173.4 325.8L1195.9 327.8 M1173.4 325.8L1173.9 342.5 M1173.4 325.8L1193.1 334.1 M1173.9 342.5L1193.1 334.1 M1173.9 342.5L1181.9 347.4 M1181.9 347.4L1186.5 351.3 M1181.9 347.4L1177.6 364.7 M1177.6 364.7L1195.6 363.2 M1180.2 380.3L1190.2 395.0 M1176.5 395.3L1174.9 400.4 M1174.9 400.4L1181.1 413.2 M1181.1 413.2L1186.2 414.1 M1181.1 413.2L1187.8 433.3 M1194.3 301.7L1203.3 296.7 M1192.8 317.2L1199.5 309.3 M1192.8 317.2L1195.9 327.8 M1193.1 334.1L1200.6 340.2 M1193.1 334.1L1186.5 351.3 M1186.5 351.3L1199.6 352.1 M1195.6 363.2L1202.4 361.1 M1195.6 363.2L1191.7 373.1 M1191.7 373.1L1206.4 380.1 M1191.7 373.1L1190.2 395.0 M1190.2 395.0L1204.1 387.7 M1191.9 407.2L1186.2 414.1 M1186.2 414.1L1205.6 413.0 M1208.0 289.0L1203.3 296.7 M1199.5 309.3L1216.8 311.4 M1199.5 309.3L1215.8 326.1 M1200.6 340.2L1217.9 336.3 M1199.6 352.1L1202.4 361.1 M1206.4 380.1L1218.6 374.9 M1204.1 387.7L1205.7 403.3 M1201.0 451.9L1219.1 472.1 M1205.9 473.9L1216.8 484.3 M1205.7 492.3L1214.2 494.5 M1219.7 406.0L1226.3 401.2 M1219.7 406.0L1228.1 416.2 M1219.8 417.2L1228.1 416.2 M1219.8 417.2L1228.6 434.0 M1214.5 434.2L1217.1 441.8 M1214.9 455.0L1227.4 459.5 M1214.9 455.0L1219.1 472.1 M1216.8 484.3L1228.8 477.4 M1231.0 391.1L1226.3 401.2 M1231.0 391.1L1244.1 400.8 M1226.3 401.2L1228.1 416.2 M1228.6 434.0L1226.2 447.8 M1226.2 447.8L1227.4 459.5 M1227.4 459.5L1239.4 454.1 M1227.4 459.5L1227.5 469.9 M1227.5 469.9L1228.8 477.4 M1228.8 477.4L1232.9 498.1 M1232.9 498.1L1243.7 492.3 M1227.7 510.7L1242.4 511.3 M1229.8 525.8L1243.7 523.5 M1244.4 387.4L1254.5 393.3 M1244.4 387.4L1244.1 400.8 M1244.1 400.8L1257.6 403.1 M1244.1 400.8L1243.1 415.2 M1243.1 415.2L1256.2 413.6 M1242.8 444.2L1256.1 445.8 M1239.4 454.1L1253.0 458.2 M1239.4 454.1L1244.8 469.5 M1244.8 469.5L1244.2 484.8 M1244.2 484.8L1252.0 479.8 M1244.2 484.8L1243.7 492.3 M1243.7 492.3L1254.8 508.8 M1242.4 511.3L1243.7 523.5 M1243.7 523.5L1241.7 533.5 M1254.5 393.3L1257.6 403.1 M1257.6 403.1L1273.9 401.1 M1256.2 413.6L1260.1 429.7 M1256.2 413.6L1268.1 434.3 M1260.1 429.7L1268.1 434.3 M1256.1 445.8L1267.9 441.1 M1256.1 445.8L1253.0 458.2 M1256.1 445.8L1264.8 460.4 M1253.0 458.2L1254.6 472.1 M1254.6 472.1L1269.1 468.4 M1254.6 472.1L1252.0 479.8 M1254.6 472.1L1268.4 484.7 M1252.0 479.8L1268.4 484.7 M1254.8 508.8L1265.8 507.1 M1273.9 401.1L1281.5 408.1 M1273.9 401.1L1264.4 419.5 M1264.4 419.5L1280.1 417.9 M1264.4 419.5L1268.1 434.3 M1267.9 441.1L1264.8 460.4 M1264.8 460.4L1269.1 468.4 M1269.1 468.4L1277.3 467.8 M1269.1 468.4L1268.4 484.7 M1272.3 494.8L1277.2 491.6 M1272.3 494.8L1265.8 507.1 M1265.8 507.1L1272.9 520.1 M1281.5 408.1L1280.1 417.9 M1284.1 425.7L1286.2 439.1 M1286.2 439.1L1280.0 458.1 M1280.0 458.1L1277.3 467.8 M1278.3 481.7L1277.2 491.6" fill="none" stroke="#1d2940" stroke-width="1.1" stroke-linecap="round"/>
<path d="M554.0 150.0 C557.5 152.0 567.7 159.5 575.0 162.0 C582.3 164.5 594.2 164.5 598.0 165.0 M528.0 203.0 C530.8 204.0 538.7 207.0 545.0 209.0 C551.3 211.0 559.7 214.5 566.0 215.0 C572.3 215.5 574.8 214.0 583.0 212.0 C591.2 210.0 609.7 204.5 615.0 203.0 M543.0 209.0 L542.0 221.0 M528.0 170.0 C533.3 169.7 548.8 167.7 560.0 168.0 C571.2 168.3 589.2 171.3 595.0 172.0 M612.0 188.0 C615.0 186.3 623.7 181.0 630.0 178.0 C636.3 175.0 643.7 173.3 650.0 170.0 C656.3 166.7 665.0 160.0 668.0 158.0 M855.0 177.0 C858.2 177.5 867.8 178.7 874.0 180.0 C880.2 181.3 886.8 184.3 892.0 185.0 C897.2 185.7 901.7 184.2 905.0 184.0 C908.3 183.8 910.8 184.0 912.0 184.0 M875.0 154.0 C876.3 155.8 880.2 160.5 883.0 165.0 C885.8 169.5 889.8 174.8 892.0 181.0 C894.2 187.2 894.5 195.3 896.0 202.0 C897.5 208.7 900.2 217.8 901.0 221.0 M799.0 195.0 C802.0 195.2 812.8 194.8 817.0 196.0 C821.2 197.2 819.3 200.7 824.0 202.0 C828.7 203.3 841.5 203.7 845.0 204.0 M817.0 196.0 C817.2 198.0 818.3 203.8 818.0 208.0 C817.7 212.2 815.5 218.8 815.0 221.0 M968.0 142.0 C969.2 143.3 974.3 146.2 975.0 150.0 C975.7 153.8 972.5 162.5 972.0 165.0 M1113.0 95.0 C1113.3 99.5 1114.3 113.7 1115.0 122.0 C1115.7 130.3 1116.2 137.8 1117.0 145.0 C1117.8 152.2 1119.5 159.3 1120.0 165.0 C1120.5 170.7 1120.0 176.7 1120.0 179.0 M1070.0 70.0 C1069.8 73.2 1068.8 81.8 1069.0 89.0 C1069.2 96.2 1070.7 109.0 1071.0 113.0 M1083.0 106.0 C1084.5 106.7 1089.0 108.0 1092.0 110.0 C1095.0 112.0 1099.5 116.7 1101.0 118.0 M1090.0 75.0 C1091.7 76.7 1096.2 81.7 1100.0 85.0 C1103.8 88.3 1110.8 93.3 1113.0 95.0 M1095.0 66.0 C1096.7 68.3 1101.2 77.0 1105.0 80.0 C1108.8 83.0 1115.8 83.3 1118.0 84.0 M1100.0 100.0 C1100.3 103.3 1103.7 114.2 1102.0 120.0 C1100.3 125.8 1092.0 132.5 1090.0 135.0 M1050.0 170.0 C1046.7 170.8 1036.3 173.3 1030.0 175.0 C1023.7 176.7 1015.0 179.2 1012.0 180.0 M1045.0 188.0 C1048.3 188.7 1058.3 190.0 1065.0 192.0 C1071.7 194.0 1079.2 196.2 1085.0 200.0 C1090.8 203.8 1097.5 212.5 1100.0 215.0 M1061.0 168.0 C1061.2 171.7 1062.5 181.2 1062.0 190.0 C1061.5 198.8 1058.7 215.8 1058.0 221.0 M1079.0 169.0 C1079.2 173.3 1080.7 186.3 1080.0 195.0 C1079.3 203.7 1075.8 216.7 1075.0 221.0 M1106.0 179.0 C1105.0 182.5 1100.2 193.0 1100.0 200.0 C1099.8 207.0 1104.2 217.5 1105.0 221.0 M1022.0 138.0 C1025.0 138.3 1032.8 140.7 1040.0 140.0 C1047.2 139.3 1060.8 135.0 1065.0 134.0 M1018.0 163.0 C1015.0 165.0 1004.7 169.7 1000.0 175.0 C995.3 180.3 992.7 189.2 990.0 195.0 C987.3 200.8 985.0 207.5 984.0 210.0 M1187.0 141.0 C1189.2 140.0 1195.8 137.2 1200.0 135.0 C1204.2 132.8 1210.0 129.2 1212.0 128.0 M1140.0 145.0 C1143.3 145.8 1153.3 146.7 1160.0 150.0 C1166.7 153.3 1174.2 159.2 1180.0 165.0 C1185.8 170.8 1189.7 180.0 1195.0 185.0 C1200.3 190.0 1209.2 193.3 1212.0 195.0 M1328.0 93.0 L1316.0 95.0 M1235.0 66.0 C1237.2 69.8 1242.8 80.7 1248.0 89.0 C1253.2 97.3 1260.7 108.5 1266.0 116.0 C1271.3 123.5 1274.0 128.0 1280.0 134.0 C1286.0 140.0 1298.3 149.0 1302.0 152.0 M1257.0 66.0 C1259.2 68.3 1264.8 75.5 1270.0 80.0 C1275.2 84.5 1285.0 90.8 1288.0 93.0 M1280.0 161.0 C1283.7 162.8 1293.7 169.0 1302.0 172.0 C1310.3 175.0 1320.8 177.3 1330.0 179.0 C1339.2 180.7 1346.5 180.8 1357.0 182.0 C1367.5 183.2 1383.3 184.2 1393.0 186.0 C1402.7 187.8 1407.2 189.3 1415.0 193.0 C1422.8 196.7 1435.8 205.5 1440.0 208.0 M1402.0 109.0 C1404.2 112.7 1415.0 123.8 1415.0 131.0 C1415.0 138.2 1405.3 145.5 1402.0 152.0 C1398.7 158.5 1394.0 164.8 1395.0 170.0 C1396.0 175.2 1406.5 179.3 1408.0 183.0 C1409.5 186.7 1410.3 188.2 1404.0 192.0 C1397.7 195.8 1379.3 201.2 1370.0 206.0 C1360.7 210.8 1351.7 218.5 1348.0 221.0 M1212.0 210.0 C1216.7 209.5 1230.2 207.7 1240.0 207.0 C1249.8 206.3 1265.8 206.2 1271.0 206.0 M651.0 231.0 C653.2 230.5 658.2 228.7 664.0 228.0 C669.8 227.3 678.8 228.2 686.0 227.0 C693.2 225.8 703.5 222.0 707.0 221.0 M528.0 249.0 C530.3 250.3 536.0 254.7 542.0 257.0 C548.0 259.3 551.3 262.0 564.0 263.0 C576.7 264.0 601.3 261.8 618.0 263.0 C634.7 264.2 651.8 268.5 664.0 270.0 C676.2 271.5 686.5 271.7 691.0 272.0 M651.0 231.0 C650.7 235.0 649.2 245.3 649.0 255.0 C648.8 264.7 649.7 279.7 650.0 289.0 C650.3 298.3 648.7 305.3 651.0 311.0 C653.3 316.7 658.2 319.5 664.0 323.0 C669.8 326.5 678.5 329.3 686.0 332.0 C693.5 334.7 701.5 336.3 709.0 339.0 C716.5 341.7 723.2 345.5 731.0 348.0 C738.8 350.5 751.8 353.0 756.0 354.0 M630.0 343.0 C630.2 345.3 631.8 352.5 631.0 357.0 C630.2 361.5 627.2 366.8 625.0 370.0 C622.8 373.2 619.2 375.0 618.0 376.0 M740.0 221.0 L756.0 238.0 M756.0 318.0 C754.2 320.7 748.0 329.0 745.0 334.0 C742.0 339.0 739.2 345.7 738.0 348.0 M785.0 282.0 C786.5 285.0 790.5 294.0 794.0 300.0 C797.5 306.0 802.5 312.3 806.0 318.0 C809.5 323.7 814.7 329.0 815.0 334.0 C815.3 339.0 808.5 341.0 808.0 348.0 C807.5 355.0 811.3 371.3 812.0 376.0 M819.0 311.0 C818.7 314.8 815.2 326.3 817.0 334.0 C818.8 341.7 828.2 350.0 830.0 357.0 C831.8 364.0 828.3 372.8 828.0 376.0 M756.0 240.0 L775.0 239.0 M833.0 250.0 C829.5 252.2 819.2 259.5 812.0 263.0 C804.8 266.5 797.0 269.8 790.0 271.0 C783.0 272.2 775.7 269.3 770.0 270.0 C764.3 270.7 758.3 274.2 756.0 275.0 M760.0 255.0 C762.5 256.2 770.0 259.3 775.0 262.0 C780.0 264.7 787.5 269.5 790.0 271.0 M756.0 305.0 C759.2 305.8 767.5 307.8 775.0 310.0 C782.5 312.2 792.8 315.5 801.0 318.0 C809.2 320.5 816.5 323.0 824.0 325.0 C831.5 327.0 842.3 329.2 846.0 330.0 M846.0 316.0 C846.7 313.3 847.7 304.3 850.0 300.0 C852.3 295.7 858.3 291.7 860.0 290.0 M864.0 323.0 C865.0 325.8 870.0 335.8 870.0 340.0 C870.0 344.2 865.0 346.7 864.0 348.0 M870.0 221.0 C871.7 223.3 875.8 231.0 880.0 235.0 C884.2 239.0 889.7 240.5 895.0 245.0 C900.3 249.5 909.2 259.2 912.0 262.0 M880.0 235.0 C879.2 238.3 876.8 246.0 875.0 255.0 C873.2 264.0 870.0 283.3 869.0 289.0 M895.0 245.0 C894.2 248.3 888.7 259.2 890.0 265.0 C891.3 270.8 900.8 277.5 903.0 280.0 M919.0 246.0 C921.7 246.7 928.8 250.3 935.0 250.0 C941.2 249.7 952.5 245.0 956.0 244.0 M923.0 289.0 C925.8 290.0 933.8 293.2 940.0 295.0 C946.2 296.8 952.7 299.5 960.0 300.0 C967.3 300.5 980.0 298.3 984.0 298.0 M937.0 266.0 C940.0 267.0 949.5 268.8 955.0 272.0 C960.5 275.2 965.2 282.8 970.0 285.0 C974.8 287.2 981.7 285.0 984.0 285.0 M940.0 295.0 C940.8 298.3 945.5 308.3 945.0 315.0 C944.5 321.7 938.3 328.5 937.0 335.0 C935.7 341.5 937.0 350.8 937.0 354.0 M960.0 300.0 C960.3 303.3 962.8 313.3 962.0 320.0 C961.2 326.7 955.5 333.8 955.0 340.0 C954.5 346.2 958.3 354.2 959.0 357.0 M914.0 307.0 C915.8 308.8 919.8 316.7 925.0 318.0 C930.2 319.3 941.7 315.5 945.0 315.0 M970.0 221.0 C970.8 224.2 972.7 235.2 975.0 240.0 C977.3 244.8 982.5 248.3 984.0 250.0 M959.0 228.0 C960.0 231.7 962.3 243.0 965.0 250.0 C967.7 257.0 974.2 264.2 975.0 270.0 C975.8 275.8 970.8 282.5 970.0 285.0 M924.0 330.0 C924.7 332.5 925.8 341.0 928.0 345.0 C930.2 349.0 935.5 352.5 937.0 354.0 M896.0 339.0 C897.5 341.2 904.3 347.5 905.0 352.0 C905.7 356.5 900.0 362.0 900.0 366.0 C900.0 370.0 904.2 374.3 905.0 376.0 M914.0 348.0 C915.0 350.3 917.3 357.3 920.0 362.0 C922.7 366.7 928.3 373.7 930.0 376.0 M937.0 354.0 C938.3 356.0 942.8 362.3 945.0 366.0 C947.2 369.7 949.2 374.3 950.0 376.0 M959.0 357.0 C960.5 358.5 965.3 362.8 968.0 366.0 C970.7 369.2 973.8 374.3 975.0 376.0 M846.0 352.0 C846.7 354.3 849.7 362.0 850.0 366.0 C850.3 370.0 848.3 374.3 848.0 376.0 M864.0 348.0 C864.7 350.3 865.3 357.3 868.0 362.0 C870.7 366.7 878.0 373.7 880.0 376.0 M1138.0 291.0 C1141.0 294.3 1150.8 304.7 1156.0 311.0 C1161.2 317.3 1164.8 322.8 1169.0 329.0 C1173.2 335.2 1179.0 344.8 1181.0 348.0 M984.0 241.0 L1018.0 246.0 M984.0 305.0 C987.8 304.2 999.5 301.5 1007.0 300.0 C1014.5 298.5 1021.8 294.2 1029.0 296.0 C1036.2 297.8 1046.5 308.5 1050.0 311.0 M984.0 250.0 C985.8 252.5 992.3 259.3 995.0 265.0 C997.7 270.7 998.5 278.2 1000.0 284.0 C1001.5 289.8 1003.3 297.3 1004.0 300.0 M984.0 330.0 C986.7 329.2 994.0 326.3 1000.0 325.0 C1006.0 323.7 1012.3 321.3 1020.0 322.0 C1027.7 322.7 1041.7 327.8 1046.0 329.0 M1007.0 300.0 C1007.8 304.2 1012.0 316.7 1012.0 325.0 C1012.0 333.3 1007.8 345.8 1007.0 350.0 M1029.0 264.0 C1032.5 263.7 1042.3 261.8 1050.0 262.0 C1057.7 262.2 1066.8 263.2 1075.0 265.0 C1083.2 266.8 1095.0 271.7 1099.0 273.0 M1036.0 284.0 C1039.2 283.7 1048.5 281.8 1055.0 282.0 C1061.5 282.2 1071.7 284.5 1075.0 285.0 M1058.0 221.0 C1057.5 224.2 1056.3 233.2 1055.0 240.0 C1053.7 246.8 1050.8 258.3 1050.0 262.0 M1075.0 221.0 C1075.5 225.0 1078.0 237.7 1078.0 245.0 C1078.0 252.3 1075.5 258.3 1075.0 265.0 C1074.5 271.7 1075.0 281.7 1075.0 285.0 M1105.0 221.0 C1105.8 223.3 1107.5 230.8 1110.0 235.0 C1112.5 239.2 1118.3 244.2 1120.0 246.0 M1086.0 291.0 C1086.7 294.2 1088.2 304.7 1090.0 310.0 C1091.8 315.3 1095.8 315.7 1097.0 323.0 C1098.2 330.3 1097.0 348.8 1097.0 354.0 M1059.0 300.0 C1060.0 303.3 1064.0 312.8 1065.0 320.0 C1066.0 327.2 1065.0 339.2 1065.0 343.0 M1117.0 311.0 C1120.0 312.2 1128.5 318.0 1135.0 318.0 C1141.5 318.0 1152.5 312.2 1156.0 311.0 M1111.0 327.0 C1114.2 328.3 1123.5 332.0 1130.0 335.0 C1136.5 338.0 1143.0 344.3 1150.0 345.0 C1157.0 345.7 1168.3 340.0 1172.0 339.0 M1102.0 287.0 C1104.2 288.3 1110.5 293.5 1115.0 295.0 C1119.5 296.5 1126.7 295.8 1129.0 296.0 M1160.0 277.0 C1163.3 275.8 1173.3 272.5 1180.0 270.0 C1186.7 267.5 1194.7 263.3 1200.0 262.0 C1205.3 260.7 1210.0 262.0 1212.0 262.0 M1165.0 311.0 C1168.3 310.0 1177.2 306.8 1185.0 305.0 C1192.8 303.2 1207.5 300.8 1212.0 300.0 M1185.0 228.0 C1186.7 231.7 1192.5 244.3 1195.0 250.0 C1197.5 255.7 1198.3 255.3 1200.0 262.0 C1201.7 268.7 1203.0 282.0 1205.0 290.0 C1207.0 298.0 1210.8 306.7 1212.0 310.0 M1040.0 344.0 C1040.3 346.7 1042.3 354.7 1042.0 360.0 C1041.7 365.3 1038.7 373.3 1038.0 376.0 M1074.0 344.0 C1073.7 346.7 1071.8 354.7 1072.0 360.0 C1072.2 365.3 1074.5 373.3 1075.0 376.0 M1142.0 352.0 C1141.7 354.2 1139.5 361.0 1140.0 365.0 C1140.5 369.0 1144.2 374.2 1145.0 376.0 M1176.0 351.0 C1175.0 353.3 1171.8 360.8 1170.0 365.0 C1168.2 369.2 1165.8 374.2 1165.0 376.0 M1000.0 357.0 C1001.7 358.5 1006.7 362.8 1010.0 366.0 C1013.3 369.2 1018.3 374.3 1020.0 376.0 M1311.0 289.0 C1310.3 292.0 1307.5 300.3 1307.0 307.0 C1306.5 313.7 1307.5 322.2 1308.0 329.0 C1308.5 335.8 1309.5 342.2 1310.0 348.0 C1310.5 353.8 1310.8 361.3 1311.0 364.0 M1316.0 289.0 C1317.2 291.7 1319.2 299.0 1323.0 305.0 C1326.8 311.0 1336.3 321.7 1339.0 325.0 M1368.0 284.0 C1364.7 284.8 1354.3 286.0 1348.0 289.0 C1341.7 292.0 1336.8 298.3 1330.0 302.0 C1323.2 305.7 1315.3 309.5 1307.0 311.0 C1298.7 312.5 1289.0 309.8 1280.0 311.0 C1271.0 312.2 1260.5 316.5 1253.0 318.0 C1245.5 319.5 1238.0 319.7 1235.0 320.0 M1370.0 273.0 C1369.7 275.3 1369.8 281.3 1368.0 287.0 C1366.2 292.7 1363.5 301.0 1359.0 307.0 C1354.5 313.0 1344.0 320.3 1341.0 323.0 M1406.0 300.0 C1405.0 303.0 1402.2 312.3 1400.0 318.0 C1397.8 323.7 1395.7 328.5 1393.0 334.0 C1390.3 339.5 1386.3 344.0 1384.0 351.0 C1381.7 358.0 1379.8 371.8 1379.0 376.0 M1296.0 241.0 C1294.8 243.3 1291.3 251.2 1289.0 255.0 C1286.7 258.8 1281.7 260.3 1282.0 264.0 C1282.3 267.7 1289.5 274.8 1291.0 277.0 M1339.0 259.0 C1340.5 256.5 1343.5 249.2 1348.0 244.0 C1352.5 238.8 1361.5 231.8 1366.0 228.0 C1370.5 224.2 1373.5 222.2 1375.0 221.0 M1440.0 244.0 C1436.7 245.8 1424.8 250.2 1420.0 255.0 C1415.2 259.8 1414.3 267.7 1411.0 273.0 C1407.7 278.3 1401.8 284.7 1400.0 287.0 M1226.0 270.0 C1228.3 271.3 1235.2 274.7 1240.0 278.0 C1244.8 281.3 1252.5 288.0 1255.0 290.0 M1212.0 300.0 L1226.0 296.0 M1257.0 338.0 C1257.8 335.8 1258.2 328.3 1262.0 325.0 C1265.8 321.7 1277.0 319.2 1280.0 318.0 M1240.0 355.0 C1243.3 354.5 1255.8 350.3 1260.0 352.0 C1264.2 353.7 1266.7 361.0 1265.0 365.0 C1263.3 369.0 1252.5 374.2 1250.0 376.0 M691.0 392.0 C686.8 393.8 672.8 398.5 666.0 403.0 C659.2 407.5 655.3 413.3 650.0 419.0 C644.7 424.7 640.0 431.3 634.0 437.0 C628.0 442.7 619.7 447.3 614.0 453.0 C608.3 458.7 604.2 465.0 600.0 471.0 C595.8 477.0 592.7 483.7 589.0 489.0 C585.3 494.3 579.8 500.7 578.0 503.0 M691.0 392.0 C694.0 390.5 703.3 385.7 709.0 383.0 C714.7 380.3 722.3 377.2 725.0 376.0 M666.0 403.0 C667.8 406.0 675.5 416.8 677.0 421.0 C678.5 425.2 672.7 426.2 675.0 428.0 C677.3 429.8 688.5 428.3 691.0 432.0 C693.5 435.7 689.3 444.3 690.0 450.0 C690.7 455.7 696.0 460.7 695.0 466.0 C694.0 471.3 688.8 477.5 684.0 482.0 C679.2 486.5 667.8 489.7 666.0 493.0 C664.2 496.3 671.8 500.5 673.0 502.0 M725.0 376.0 C726.0 378.3 727.7 385.8 731.0 390.0 C734.3 394.2 740.8 398.5 745.0 401.0 C749.2 403.5 754.2 404.3 756.0 405.0 M745.0 444.0 C744.2 447.7 740.0 460.3 740.0 466.0 C740.0 471.7 744.2 476.0 745.0 478.0 M528.0 485.0 C530.0 484.2 535.3 481.5 540.0 480.0 C544.7 478.5 553.3 476.7 556.0 476.0 M691.0 450.0 L718.0 446.0 M537.0 383.0 L533.0 376.0 M808.0 385.0 C811.7 385.5 823.0 388.8 830.0 388.0 C837.0 387.2 843.3 380.5 850.0 380.0 C856.7 379.5 863.3 385.0 870.0 385.0 C876.7 385.0 881.5 380.0 890.0 380.0 C898.5 380.0 915.8 384.2 921.0 385.0 M808.0 400.0 C811.7 400.3 822.2 402.3 830.0 402.0 C837.8 401.7 846.7 398.3 855.0 398.0 C863.3 397.7 872.5 400.5 880.0 400.0 C887.5 399.5 893.0 395.0 900.0 395.0 C907.0 395.0 918.3 399.2 922.0 400.0 M810.0 421.0 C814.2 421.7 827.5 425.5 835.0 425.0 C842.5 424.5 847.5 418.8 855.0 418.0 C862.5 417.2 872.5 420.5 880.0 420.0 C887.5 419.5 896.7 415.8 900.0 415.0 M830.0 376.0 C830.3 380.3 831.2 393.8 832.0 402.0 C832.8 410.2 836.2 418.7 835.0 425.0 C833.8 431.3 826.7 437.5 825.0 440.0 M850.0 380.0 C850.8 383.0 854.2 391.7 855.0 398.0 C855.8 404.3 854.2 411.8 855.0 418.0 C855.8 424.2 860.8 429.7 860.0 435.0 C859.2 440.3 851.7 447.5 850.0 450.0 M870.0 376.0 C870.8 380.0 873.3 392.7 875.0 400.0 C876.7 407.3 878.3 413.3 880.0 420.0 C881.7 426.7 883.0 434.0 885.0 440.0 C887.0 446.0 890.8 453.3 892.0 456.0 M895.0 376.0 C895.8 379.2 899.2 388.5 900.0 395.0 C900.8 401.5 899.2 409.2 900.0 415.0 C900.8 420.8 904.2 427.5 905.0 430.0 M815.0 444.0 C818.3 443.3 827.5 441.5 835.0 440.0 C842.5 438.5 851.7 435.0 860.0 435.0 C868.3 435.0 876.3 439.5 885.0 440.0 C893.7 440.5 907.5 438.3 912.0 438.0 M840.0 410.0 C840.8 413.7 845.3 426.2 845.0 432.0 C844.7 437.8 839.2 442.8 838.0 445.0 M865.0 405.0 C865.5 408.8 866.8 421.3 868.0 428.0 C869.2 434.7 871.3 442.2 872.0 445.0 M935.0 376.0 C935.8 379.2 936.0 390.2 940.0 395.0 C944.0 399.8 955.8 403.3 959.0 405.0 M950.0 376.0 C950.8 378.3 952.0 388.2 955.0 390.0 C958.0 391.8 963.2 387.0 968.0 387.0 C972.8 387.0 981.3 389.5 984.0 390.0 M944.0 421.0 C946.7 420.0 954.8 416.8 960.0 415.0 C965.2 413.2 971.0 411.2 975.0 410.0 C979.0 408.8 982.5 408.3 984.0 408.0 M946.0 453.0 C949.2 452.5 958.7 449.7 965.0 450.0 C971.3 450.3 980.8 454.2 984.0 455.0 M946.0 471.0 C949.2 470.5 958.7 467.7 965.0 468.0 C971.3 468.3 980.8 472.2 984.0 473.0 M912.0 465.0 C915.0 465.5 924.3 467.0 930.0 468.0 C935.7 469.0 943.3 470.5 946.0 471.0 M937.0 494.0 C940.0 495.0 948.7 497.3 955.0 500.0 C961.3 502.7 970.2 506.7 975.0 510.0 C979.8 513.3 982.5 518.3 984.0 520.0 M896.0 489.0 C898.3 490.8 906.0 495.5 910.0 500.0 C914.0 504.5 917.5 510.8 920.0 516.0 C922.5 521.2 924.2 528.5 925.0 531.0 M780.0 440.0 L785.0 456.0 M756.0 440.0 C758.3 440.8 766.0 445.0 770.0 445.0 C774.0 445.0 778.3 440.8 780.0 440.0 M1052.0 482.0 C1051.2 485.5 1049.0 494.8 1047.0 503.0 C1045.0 511.2 1041.2 526.3 1040.0 531.0 M1129.0 443.0 L1140.0 461.0 M1140.0 461.0 L1160.0 444.0 M1081.0 475.0 C1081.3 477.7 1076.5 488.7 1083.0 491.0 C1089.5 493.3 1113.8 489.3 1120.0 489.0 M984.0 396.0 C987.8 396.8 997.7 399.5 1007.0 401.0 C1016.3 402.5 1034.5 404.3 1040.0 405.0 M1000.0 376.0 C1000.8 379.2 1003.8 386.7 1005.0 395.0 C1006.2 403.3 1006.7 420.8 1007.0 426.0 M1020.0 376.0 C1020.3 380.0 1022.0 392.8 1022.0 400.0 C1022.0 407.2 1020.3 415.8 1020.0 419.0 M1045.0 390.0 C1048.3 390.3 1058.3 392.3 1065.0 392.0 C1071.7 391.7 1078.3 388.0 1085.0 388.0 C1091.7 388.0 1097.0 391.0 1105.0 392.0 C1113.0 393.0 1128.3 393.7 1133.0 394.0 M1075.0 376.0 C1075.8 379.2 1079.3 387.8 1080.0 395.0 C1080.7 402.2 1079.2 415.0 1079.0 419.0 M1100.0 376.0 C1100.3 379.2 1102.5 388.3 1102.0 395.0 C1101.5 401.7 1097.8 412.5 1097.0 416.0 M1079.0 419.0 C1080.0 422.0 1083.5 431.0 1085.0 437.0 C1086.5 443.0 1087.5 452.0 1088.0 455.0 M1110.0 417.0 C1110.8 420.0 1114.8 429.8 1115.0 435.0 C1115.2 440.2 1111.7 445.8 1111.0 448.0 M1059.0 417.0 C1057.5 419.2 1053.2 425.3 1050.0 430.0 C1046.8 434.7 1043.2 440.0 1040.0 445.0 C1036.8 450.0 1032.5 457.5 1031.0 460.0 M984.0 445.0 C986.7 444.2 993.7 442.8 1000.0 440.0 C1006.3 437.2 1018.3 430.0 1022.0 428.0 M1029.0 482.0 C1032.5 481.7 1041.3 481.2 1050.0 480.0 C1058.7 478.8 1075.8 475.8 1081.0 475.0 M1040.0 500.0 C1043.3 499.7 1052.8 499.5 1060.0 498.0 C1067.2 496.5 1079.2 492.2 1083.0 491.0 M1060.0 498.0 C1060.3 500.8 1062.3 509.5 1062.0 515.0 C1061.7 520.5 1058.7 528.3 1058.0 531.0 M1072.0 490.0 C1072.5 493.3 1075.0 503.2 1075.0 510.0 C1075.0 516.8 1072.5 527.5 1072.0 531.0 M1145.0 376.0 C1145.8 379.2 1146.7 388.2 1150.0 395.0 C1153.3 401.8 1162.5 413.3 1165.0 417.0 M1165.0 376.0 C1165.5 379.2 1165.0 391.2 1168.0 395.0 C1171.0 398.8 1180.5 398.3 1183.0 399.0 M1138.0 417.0 L1145.0 430.0 M1194.0 455.0 L1212.0 450.0 M1199.0 489.0 C1195.8 490.0 1186.5 491.5 1180.0 495.0 C1173.5 498.5 1165.0 504.0 1160.0 510.0 C1155.0 516.0 1151.7 527.5 1150.0 531.0 M984.0 500.0 C986.7 501.7 995.2 504.8 1000.0 510.0 C1004.8 515.2 1010.8 527.5 1013.0 531.0 M990.0 480.0 C992.5 480.8 998.5 484.7 1005.0 485.0 C1011.5 485.3 1025.0 482.5 1029.0 482.0 M1381.0 448.0 C1386.7 451.0 1405.2 460.3 1415.0 466.0 C1424.8 471.7 1435.8 479.3 1440.0 482.0 M1212.0 390.0 C1214.2 390.8 1220.3 395.8 1225.0 395.0 C1229.7 394.2 1235.8 388.2 1240.0 385.0 C1244.2 381.8 1248.3 377.5 1250.0 376.0 M1212.0 405.0 C1215.0 404.5 1224.5 401.5 1230.0 402.0 C1235.5 402.5 1240.2 406.7 1245.0 408.0 C1249.8 409.3 1256.7 409.7 1259.0 410.0 M1225.0 395.0 C1225.8 399.5 1229.5 413.7 1230.0 422.0 C1230.5 430.3 1229.3 437.0 1228.0 445.0 C1226.7 453.0 1223.7 460.8 1222.0 470.0 C1220.3 479.2 1219.2 489.8 1218.0 500.0 C1216.8 510.2 1215.5 525.8 1215.0 531.0 M1245.0 408.0 C1245.8 411.3 1249.5 421.0 1250.0 428.0 C1250.5 435.0 1249.7 442.2 1248.0 450.0 C1246.3 457.8 1242.2 465.8 1240.0 475.0 C1237.8 484.2 1235.3 495.7 1235.0 505.0 C1234.7 514.3 1237.5 526.7 1238.0 531.0 M1265.0 420.0 C1265.5 424.2 1268.0 436.7 1268.0 445.0 C1268.0 453.3 1266.0 460.8 1265.0 470.0 C1264.0 479.2 1262.0 489.8 1262.0 500.0 C1262.0 510.2 1264.5 525.8 1265.0 531.0 M1212.0 455.0 C1214.7 454.5 1222.0 452.8 1228.0 452.0 C1234.0 451.2 1241.3 450.7 1248.0 450.0 C1254.7 449.3 1262.7 449.0 1268.0 448.0 C1273.3 447.0 1278.0 444.7 1280.0 444.0 M1212.0 480.0 C1216.7 479.2 1231.2 476.7 1240.0 475.0 C1248.8 473.3 1258.2 470.7 1265.0 470.0 C1271.8 469.3 1278.3 470.8 1281.0 471.0 M1212.0 505.0 C1215.8 505.0 1226.7 505.8 1235.0 505.0 C1243.3 504.2 1254.2 501.2 1262.0 500.0 C1269.8 498.8 1278.7 498.3 1282.0 498.0 M1280.0 444.0 C1282.5 443.3 1292.0 438.2 1295.0 440.0 C1298.0 441.8 1298.5 450.0 1298.0 455.0 C1297.5 460.0 1293.0 467.5 1292.0 470.0 M1330.0 395.0 C1333.3 395.3 1340.0 394.5 1350.0 397.0 C1360.0 399.5 1383.3 407.8 1390.0 410.0 M1353.0 376.0 C1352.5 379.5 1351.3 390.5 1350.0 397.0 C1348.7 403.5 1345.8 412.0 1345.0 415.0 M1390.0 376.0 C1391.7 379.2 1396.5 390.2 1400.0 395.0 C1403.5 399.8 1409.2 403.3 1411.0 405.0 M740.0 545.0 C736.0 546.5 722.7 549.5 716.0 554.0 C709.3 558.5 705.7 567.2 700.0 572.0 C694.3 576.8 687.0 579.3 682.0 583.0 C677.0 586.7 675.3 590.2 670.0 594.0 C664.7 597.8 656.7 603.2 650.0 606.0 C643.3 608.8 637.2 610.2 630.0 611.0 C622.8 611.8 610.8 611.0 607.0 611.0 M650.0 538.0 C650.8 541.0 652.7 549.7 655.0 556.0 C657.3 562.3 661.0 570.0 664.0 576.0 C667.0 582.0 671.5 589.3 673.0 592.0 M688.0 533.0 C687.3 536.5 685.0 545.7 684.0 554.0 C683.0 562.3 682.3 578.2 682.0 583.0 M622.0 554.0 C621.0 557.0 617.3 564.5 616.0 572.0 C614.7 579.5 614.2 592.5 614.0 599.0 C613.8 605.5 614.8 609.0 615.0 611.0 M589.0 646.0 C594.3 647.2 612.3 652.2 621.0 653.0 C629.7 653.8 632.0 650.8 641.0 651.0 C650.0 651.2 661.5 653.3 675.0 654.0 C688.5 654.7 711.8 653.3 722.0 655.0 C732.2 656.7 730.3 659.8 736.0 664.0 C741.7 668.2 752.7 677.3 756.0 680.0 M621.0 653.0 C622.0 655.3 626.7 661.5 627.0 667.0 C627.3 672.5 623.7 682.8 623.0 686.0 M528.0 560.0 C530.0 558.3 536.2 551.7 540.0 550.0 C543.8 548.3 549.2 550.0 551.0 550.0 M528.0 600.0 C530.8 600.8 537.2 605.0 545.0 605.0 C552.8 605.0 570.0 600.8 575.0 600.0 M589.0 646.0 C585.0 647.5 572.3 651.0 565.0 655.0 C557.7 659.0 548.3 667.5 545.0 670.0 M869.0 551.0 C871.3 551.8 879.2 553.0 883.0 556.0 C886.8 559.0 887.2 565.7 892.0 569.0 C896.8 572.3 908.7 574.8 912.0 576.0 M869.0 646.0 C871.3 648.7 877.8 657.0 883.0 662.0 C888.2 667.0 897.2 673.7 900.0 676.0 M892.0 569.0 C892.2 573.8 891.2 593.0 893.0 598.0 C894.8 603.0 901.3 598.8 903.0 599.0 M835.0 620.0 C835.3 624.2 834.5 639.2 837.0 645.0 C839.5 650.8 845.3 654.2 850.0 655.0 C854.7 655.8 861.8 653.2 865.0 650.0 C868.2 646.8 868.3 638.3 869.0 636.0 M837.0 660.0 C840.8 660.3 854.5 663.7 860.0 662.0 C865.5 660.3 868.3 652.0 870.0 650.0 M756.0 600.0 C759.2 599.7 768.7 596.3 775.0 598.0 C781.3 599.7 790.8 608.0 794.0 610.0 M800.0 531.0 C800.8 533.3 800.8 541.8 805.0 545.0 C809.2 548.2 819.2 550.8 825.0 550.0 C830.8 549.2 837.5 541.7 840.0 540.0 M926.0 531.0 C930.0 531.7 940.3 532.3 950.0 535.0 C959.7 537.7 978.3 545.0 984.0 547.0 M903.0 612.0 C905.8 614.2 914.7 619.5 920.0 625.0 C925.3 630.5 930.8 638.3 935.0 645.0 C939.2 651.7 943.3 661.7 945.0 665.0 M1050.0 628.0 C1051.8 630.7 1057.7 637.5 1061.0 644.0 C1064.3 650.5 1067.8 661.3 1070.0 667.0 C1072.2 672.7 1073.3 676.2 1074.0 678.0 M984.0 615.0 C986.3 615.3 992.3 621.5 998.0 617.0 C1003.7 612.5 1014.7 592.8 1018.0 588.0 M1018.0 588.0 C1019.2 590.0 1023.5 593.8 1025.0 600.0 C1026.5 606.2 1026.7 620.8 1027.0 625.0 M1075.0 531.0 C1075.5 533.3 1078.0 540.8 1078.0 545.0 C1078.0 549.2 1075.5 554.2 1075.0 556.0 M1120.0 531.0 C1117.5 534.2 1108.8 544.7 1105.0 550.0 C1101.2 555.3 1098.3 560.8 1097.0 563.0 M1203.0 531.0 C1203.3 535.8 1205.8 551.0 1205.0 560.0 C1204.2 569.0 1199.2 580.8 1198.0 585.0 M984.0 640.0 C985.8 640.8 993.0 637.3 995.0 645.0 C997.0 652.7 995.8 679.2 996.0 686.0 M1097.0 655.0 C1096.7 657.5 1096.2 664.8 1095.0 670.0 C1093.8 675.2 1090.8 683.3 1090.0 686.0 M1034.0 662.0 C1030.0 661.7 1018.3 659.5 1010.0 660.0 C1001.7 660.5 988.3 664.2 984.0 665.0 M1307.0 531.0 C1305.5 532.8 1301.3 538.7 1298.0 542.0 C1294.7 545.3 1288.8 549.5 1287.0 551.0 M1345.0 560.0 C1349.2 562.0 1362.5 568.5 1370.0 572.0 C1377.5 575.5 1386.7 579.5 1390.0 581.0 M1440.0 630.0 C1437.3 633.0 1428.2 643.5 1424.0 648.0 C1419.8 652.5 1416.5 655.5 1415.0 657.0 M1253.0 538.0 C1256.0 538.7 1266.2 540.2 1271.0 542.0 C1275.8 543.8 1280.2 547.8 1282.0 549.0 M1212.0 545.0 C1216.7 545.5 1232.0 546.8 1240.0 548.0 C1248.0 549.2 1253.0 551.8 1260.0 552.0 C1267.0 552.2 1278.3 549.5 1282.0 549.0 M1212.0 621.0 C1216.7 621.7 1230.3 623.8 1240.0 625.0 C1249.7 626.2 1261.7 623.8 1270.0 628.0 C1278.3 632.2 1285.0 642.8 1290.0 650.0 C1295.0 657.2 1298.3 667.5 1300.0 671.0 M1241.0 671.0 C1244.2 669.2 1251.8 663.5 1260.0 660.0 C1268.2 656.5 1285.0 651.7 1290.0 650.0" fill="none" stroke="#1f2b42" stroke-width="1.15" stroke-linecap="round" stroke-linejoin="round"/>
<path d="M668.0 123.0 C670.8 120.8 679.2 113.7 685.0 110.0 C690.8 106.3 695.2 105.5 703.0 101.0 C710.8 96.5 724.2 87.8 732.0 83.0 C739.8 78.2 745.2 74.8 750.0 72.0 C754.8 69.2 759.2 67.0 761.0 66.0 M824.0 67.0 C822.0 67.8 819.5 68.8 812.0 72.0 C804.5 75.2 788.3 80.7 779.0 86.0 C769.7 91.3 761.8 99.0 756.0 104.0 C750.2 109.0 747.0 109.7 744.0 116.0 C741.0 122.3 740.5 133.8 738.0 142.0 C735.5 150.2 732.0 158.2 729.0 165.0 C726.0 171.8 721.2 178.2 720.0 183.0 C718.8 187.8 720.0 189.2 722.0 194.0 C724.0 198.8 728.3 206.2 732.0 212.0 C735.7 217.8 739.2 224.2 744.0 229.0 C748.8 233.8 755.7 238.5 761.0 241.0 C766.3 243.5 773.5 243.5 776.0 244.0 M668.0 123.0 C668.5 126.2 667.2 136.5 671.0 142.0 C674.8 147.5 685.2 151.7 691.0 156.0 C696.8 160.3 701.7 165.0 706.0 168.0 C710.3 171.0 714.7 170.7 717.0 174.0 C719.3 177.3 719.5 185.7 720.0 188.0 M668.0 123.0 C665.0 125.2 657.3 131.8 650.0 136.0 C642.7 140.2 632.7 143.2 624.0 148.0 C615.3 152.8 600.0 158.3 598.0 165.0 C596.0 171.7 609.2 181.7 612.0 188.0 C614.8 194.3 611.5 198.0 615.0 203.0 C618.5 208.0 627.2 213.3 633.0 218.0 C638.8 222.7 644.7 227.7 650.0 231.0 C655.3 234.3 660.0 234.3 665.0 238.0 C670.0 241.7 675.7 248.3 680.0 253.0 C684.3 257.7 689.2 263.8 691.0 266.0 M650.0 231.0 C655.0 227.8 671.2 218.2 680.0 212.0 C688.8 205.8 696.0 197.0 703.0 194.0 C710.0 191.0 718.8 194.0 722.0 194.0 M871.0 66.0 C870.2 68.3 867.2 74.7 866.0 80.0 C864.8 85.3 864.8 93.2 864.0 98.0 C863.2 102.8 860.5 104.5 861.0 109.0 C861.5 113.5 864.8 120.5 867.0 125.0 C869.2 129.5 872.7 131.2 874.0 136.0 C875.3 140.8 876.7 150.8 875.0 154.0 C873.3 157.2 866.3 152.0 864.0 155.0 C861.7 158.0 862.5 167.2 861.0 172.0 C859.5 176.8 857.5 179.0 855.0 184.0 C852.5 189.0 847.7 195.8 846.0 202.0 C844.3 208.2 845.2 217.8 845.0 221.0 M864.0 155.0 C861.8 154.7 855.8 154.3 851.0 153.0 C846.2 151.7 839.8 146.5 835.0 147.0 C830.2 147.5 826.5 152.5 822.0 156.0 C817.5 159.5 811.8 161.8 808.0 168.0 C804.2 174.2 802.3 186.7 799.0 193.0 C795.7 199.3 790.7 201.3 788.0 206.0 C785.3 210.7 784.7 215.3 783.0 221.0 C781.3 226.7 778.8 236.8 778.0 240.0 M790.0 247.0 C793.7 246.0 805.0 242.8 812.0 241.0 C819.0 239.2 823.3 238.7 832.0 236.0 C840.7 233.3 855.0 229.0 864.0 225.0 C873.0 221.0 879.3 216.3 886.0 212.0 C892.7 207.7 899.0 203.2 904.0 199.0 C909.0 194.8 912.2 192.2 916.0 187.0 C919.8 181.8 921.7 173.0 927.0 168.0 C932.3 163.0 941.0 160.8 948.0 157.0 C955.0 153.2 962.7 148.3 969.0 145.0 C975.3 141.7 983.2 138.3 986.0 137.0 M930.0 66.0 C930.8 68.3 931.7 75.8 935.0 80.0 C938.3 84.2 944.5 84.7 950.0 91.0 C955.5 97.3 964.7 109.7 968.0 118.0 C971.3 126.3 970.2 133.8 970.0 141.0 C969.8 148.2 967.3 153.8 967.0 161.0 C966.7 168.2 969.3 177.2 968.0 184.0 C966.7 190.8 961.2 195.8 959.0 202.0 C956.8 208.2 955.7 217.8 955.0 221.0 M1086.0 66.0 C1085.8 68.3 1086.5 75.0 1085.0 80.0 C1083.5 85.0 1078.8 90.3 1077.0 96.0 C1075.2 101.7 1075.5 107.5 1074.0 114.0 C1072.5 120.5 1070.5 128.2 1068.0 135.0 C1065.5 141.8 1061.5 149.0 1059.0 155.0 C1056.5 161.0 1054.8 165.3 1053.0 171.0 C1051.2 176.7 1049.2 183.0 1048.0 189.0 C1046.8 195.0 1047.2 201.7 1046.0 207.0 C1044.8 212.3 1041.8 218.7 1041.0 221.0 M1125.0 75.0 C1125.7 78.3 1128.0 87.2 1129.0 95.0 C1130.0 102.8 1129.8 113.7 1131.0 122.0 C1132.2 130.3 1135.5 137.3 1136.0 145.0 C1136.5 152.7 1135.0 160.5 1134.0 168.0 C1133.0 175.5 1130.7 186.3 1130.0 190.0 M984.0 153.0 C987.3 153.2 998.0 152.3 1004.0 154.0 C1010.0 155.7 1014.3 160.7 1020.0 163.0 C1025.7 165.3 1031.2 167.2 1038.0 168.0 C1044.8 168.8 1054.2 167.8 1061.0 168.0 C1067.8 168.2 1071.5 167.2 1079.0 169.0 C1086.5 170.8 1099.2 175.7 1106.0 179.0 C1112.8 182.3 1115.8 187.5 1120.0 189.0 C1124.2 190.5 1129.2 188.2 1131.0 188.0 M1140.0 70.0 C1142.7 73.2 1150.7 83.7 1156.0 89.0 C1161.3 94.3 1167.5 97.2 1172.0 102.0 C1176.5 106.8 1180.5 111.5 1183.0 118.0 C1185.5 124.5 1185.2 134.7 1187.0 141.0 C1188.8 147.3 1189.8 150.8 1194.0 156.0 C1198.2 161.2 1209.0 169.3 1212.0 172.0 M1029.0 84.0 C1028.7 88.5 1028.2 102.0 1027.0 111.0 C1025.8 120.0 1023.5 129.3 1022.0 138.0 C1020.5 146.7 1020.2 155.3 1018.0 163.0 C1015.8 170.7 1011.3 176.8 1009.0 184.0 C1006.7 191.2 1004.3 199.8 1004.0 206.0 C1003.7 212.2 1006.5 218.5 1007.0 221.0 M984.0 120.0 C987.0 119.5 994.8 117.8 1002.0 117.0 C1009.2 116.2 1018.7 115.8 1027.0 115.0 C1035.3 114.2 1044.8 113.2 1052.0 112.0 C1059.2 110.8 1067.0 108.7 1070.0 108.0 M1440.0 98.0 C1437.8 98.2 1433.0 98.0 1427.0 99.0 C1421.0 100.0 1411.2 102.3 1404.0 104.0 C1396.8 105.7 1391.5 106.0 1384.0 109.0 C1376.5 112.0 1367.3 117.5 1359.0 122.0 C1350.7 126.5 1342.0 132.0 1334.0 136.0 C1326.0 140.0 1316.3 142.8 1311.0 146.0 C1305.7 149.2 1305.0 150.7 1302.0 155.0 C1299.0 159.3 1296.0 165.7 1293.0 172.0 C1290.0 178.3 1287.7 187.3 1284.0 193.0 C1280.3 198.7 1275.5 201.3 1271.0 206.0 C1266.5 210.7 1259.3 218.5 1257.0 221.0 M1328.0 80.0 C1328.3 82.5 1329.3 89.0 1330.0 95.0 C1330.7 101.0 1331.5 109.5 1332.0 116.0 C1332.5 122.5 1332.7 130.7 1333.0 134.0 C1333.3 137.3 1333.8 135.7 1334.0 136.0 M1212.0 172.0 C1215.8 175.5 1229.0 186.2 1235.0 193.0 C1241.0 199.8 1244.3 208.3 1248.0 213.0 C1251.7 217.7 1255.5 219.7 1257.0 221.0 M543.0 221.0 C543.2 225.5 543.3 239.7 544.0 248.0 C544.7 256.3 547.0 262.7 547.0 271.0 C547.0 279.3 544.5 287.5 544.0 298.0 C543.5 308.5 544.3 324.2 544.0 334.0 C543.7 343.8 542.0 350.0 542.0 357.0 C542.0 364.0 543.7 372.8 544.0 376.0 M528.0 366.0 C532.5 364.2 545.2 358.0 555.0 355.0 C564.8 352.0 576.5 350.7 587.0 348.0 C597.5 345.3 609.0 342.7 618.0 339.0 C627.0 335.3 633.3 330.8 641.0 326.0 C648.7 321.2 657.7 315.5 664.0 310.0 C670.3 304.5 674.5 298.5 679.0 293.0 C683.5 287.5 688.3 280.8 691.0 277.0 C693.7 273.2 694.3 271.2 695.0 270.0 M695.0 270.0 C699.2 269.2 712.8 267.5 720.0 265.0 C727.2 262.5 732.0 259.5 738.0 255.0 C744.0 250.5 750.7 242.5 756.0 238.0 C761.3 233.5 767.7 229.7 770.0 228.0 M641.0 221.0 C642.7 222.7 645.0 227.7 651.0 231.0 C657.0 234.3 671.2 237.0 677.0 241.0 C682.8 245.0 683.3 250.2 686.0 255.0 C688.7 259.8 691.5 264.3 693.0 270.0 C694.5 275.7 692.3 282.2 695.0 289.0 C697.7 295.8 703.0 302.7 709.0 311.0 C715.0 319.3 725.8 332.2 731.0 339.0 C736.2 345.8 739.5 347.5 740.0 352.0 C740.5 356.5 735.2 362.0 734.0 366.0 C732.8 370.0 733.2 374.3 733.0 376.0 M756.0 296.0 C753.0 296.5 744.7 299.0 738.0 299.0 C731.3 299.0 723.2 298.5 716.0 296.0 C708.8 293.5 698.5 286.0 695.0 284.0 M756.0 350.0 C746.7 350.2 713.5 349.8 700.0 351.0 C686.5 352.2 682.5 354.2 675.0 357.0 C667.5 359.8 663.7 365.5 655.0 368.0 C646.3 370.5 629.2 370.7 623.0 372.0 C616.8 373.3 618.8 375.3 618.0 376.0 M887.0 309.0 C889.2 310.5 896.5 314.5 900.0 318.0 C903.5 321.5 908.3 326.3 908.0 330.0 C907.7 333.7 897.0 337.0 898.0 340.0 C899.0 343.0 911.3 346.7 914.0 348.0 M950.0 221.0 C951.2 222.5 956.0 226.2 957.0 230.0 C958.0 233.8 959.3 238.0 956.0 244.0 C952.7 250.0 942.5 258.5 937.0 266.0 C931.5 273.5 926.8 282.2 923.0 289.0 C919.2 295.8 917.3 301.8 914.0 307.0 C910.7 312.2 904.8 317.8 903.0 320.0 M756.0 291.0 C759.8 291.8 771.5 293.7 779.0 296.0 C786.5 298.3 793.5 302.0 801.0 305.0 C808.5 308.0 816.5 312.2 824.0 314.0 C831.5 315.8 839.3 314.5 846.0 316.0 C852.7 317.5 857.8 321.2 864.0 323.0 C870.2 324.8 877.7 324.3 883.0 327.0 C888.3 329.7 890.8 335.5 896.0 339.0 C901.2 342.5 907.2 345.5 914.0 348.0 C920.8 350.5 929.5 352.5 937.0 354.0 C944.5 355.5 951.2 358.0 959.0 357.0 C966.8 356.0 979.8 349.5 984.0 348.0 M756.0 348.0 C762.8 348.5 785.7 350.0 797.0 351.0 C808.3 352.0 815.8 353.8 824.0 354.0 C832.2 354.2 839.3 353.0 846.0 352.0 C852.7 351.0 857.8 347.2 864.0 348.0 C870.2 348.8 877.7 354.0 883.0 357.0 C888.3 360.0 891.5 362.8 896.0 366.0 C900.5 369.2 907.7 374.3 910.0 376.0 M833.0 250.0 C834.5 247.5 839.0 239.0 842.0 235.0 C845.0 231.0 848.3 228.3 851.0 226.0 C853.7 223.7 856.8 221.8 858.0 221.0 M797.0 244.0 C799.2 246.2 804.3 254.0 810.0 257.0 C815.7 260.0 823.5 259.3 831.0 262.0 C838.5 264.7 848.7 268.5 855.0 273.0 C861.3 277.5 865.2 283.7 869.0 289.0 C872.8 294.3 874.5 300.2 878.0 305.0 C881.5 309.8 888.0 315.8 890.0 318.0 M1050.0 311.0 C1051.5 309.2 1053.0 303.3 1059.0 300.0 C1065.0 296.7 1079.7 293.7 1086.0 291.0 C1092.3 288.3 1093.0 285.5 1097.0 284.0 C1101.0 282.5 1107.8 282.3 1110.0 282.0 M1065.0 343.0 C1067.3 341.2 1073.7 335.3 1079.0 332.0 C1084.3 328.7 1094.0 324.5 1097.0 323.0 M1138.0 235.0 C1135.0 236.8 1126.0 242.7 1120.0 246.0 C1114.0 249.3 1105.5 250.5 1102.0 255.0 C1098.5 259.5 1099.0 267.7 1099.0 273.0 C1099.0 278.3 1101.5 284.7 1102.0 287.0 M1142.0 235.0 C1145.8 233.8 1159.0 230.3 1165.0 228.0 C1171.0 225.7 1175.8 222.2 1178.0 221.0 M1151.0 248.0 C1152.5 252.8 1157.7 266.5 1160.0 277.0 C1162.3 287.5 1163.0 300.7 1165.0 311.0 C1167.0 321.3 1169.3 330.7 1172.0 339.0 C1174.7 347.3 1178.8 354.8 1181.0 361.0 C1183.2 367.2 1184.3 373.5 1185.0 376.0 M1264.0 221.0 C1266.7 222.5 1274.7 226.7 1280.0 230.0 C1285.3 233.3 1290.3 237.7 1296.0 241.0 C1301.7 244.3 1306.8 247.0 1314.0 250.0 C1321.2 253.0 1329.7 255.2 1339.0 259.0 C1348.3 262.8 1361.0 268.3 1370.0 273.0 C1379.0 277.7 1387.0 282.5 1393.0 287.0 C1399.0 291.5 1401.5 295.5 1406.0 300.0 C1410.5 304.5 1415.0 310.2 1420.0 314.0 C1425.0 317.8 1433.3 321.5 1436.0 323.0 M1255.0 221.0 C1252.7 224.0 1245.2 233.0 1241.0 239.0 C1236.8 245.0 1232.5 249.5 1230.0 257.0 C1227.5 264.5 1225.7 276.0 1226.0 284.0 C1226.3 292.0 1230.5 299.0 1232.0 305.0 C1233.5 311.0 1233.8 314.3 1235.0 320.0 C1236.2 325.7 1238.2 329.7 1239.0 339.0 C1239.8 348.3 1239.8 369.8 1240.0 376.0 M1440.0 339.0 C1435.2 339.7 1420.3 341.0 1411.0 343.0 C1401.7 345.0 1392.7 348.3 1384.0 351.0 C1375.3 353.7 1367.3 357.0 1359.0 359.0 C1350.7 361.0 1342.0 362.2 1334.0 363.0 C1326.0 363.8 1314.8 361.8 1311.0 364.0 C1307.2 366.2 1311.0 374.0 1311.0 376.0 M725.0 376.0 C724.3 379.8 722.2 389.7 721.0 399.0 C719.8 408.3 719.3 420.8 718.0 432.0 C716.7 443.2 714.5 454.2 713.0 466.0 C711.5 477.8 709.7 495.0 709.0 503.0 C708.3 511.0 706.8 510.7 709.0 514.0 C711.2 517.3 718.3 520.2 722.0 523.0 C725.7 525.8 729.5 529.7 731.0 531.0 M756.0 472.0 C751.8 473.3 740.3 476.8 731.0 480.0 C721.7 483.2 709.3 487.7 700.0 491.0 C690.7 494.3 681.8 496.5 675.0 500.0 C668.2 503.5 663.8 508.2 659.0 512.0 C654.2 515.8 649.8 519.8 646.0 523.0 C642.2 526.2 637.7 529.7 636.0 531.0 M528.0 399.0 C529.5 396.3 533.2 384.8 537.0 383.0 C540.8 381.2 545.0 387.2 551.0 388.0 C557.0 388.8 566.7 388.2 573.0 388.0 C579.3 387.8 583.7 387.8 589.0 387.0 C594.3 386.2 600.2 384.8 605.0 383.0 C609.8 381.2 615.8 377.2 618.0 376.0 M528.0 509.0 C531.8 508.3 542.7 506.0 551.0 505.0 C559.3 504.0 570.2 503.8 578.0 503.0 C585.8 502.2 593.2 499.7 598.0 500.0 C602.8 500.3 596.5 503.5 607.0 505.0 C617.5 506.5 652.0 508.3 661.0 509.0 M878.0 487.0 C881.0 486.5 890.0 485.5 896.0 484.0 C902.0 482.5 907.5 478.7 914.0 478.0 C920.5 477.3 928.2 479.0 935.0 480.0 C941.8 481.0 946.8 485.2 955.0 484.0 C963.2 482.8 979.2 474.8 984.0 473.0 M808.0 376.0 C807.8 379.8 806.7 391.5 807.0 399.0 C807.3 406.5 808.7 413.5 810.0 421.0 C811.3 428.5 814.0 438.8 815.0 444.0 C816.0 449.2 815.8 450.7 816.0 452.0 M822.0 463.0 C822.2 466.5 822.3 478.2 823.0 484.0 C823.7 489.8 824.3 492.7 826.0 498.0 C827.7 503.3 831.2 510.5 833.0 516.0 C834.8 521.5 836.3 528.5 837.0 531.0 M822.0 463.0 C823.3 462.5 826.0 459.5 830.0 460.0 C834.0 460.5 841.3 463.5 846.0 466.0 C850.7 468.5 854.2 472.3 858.0 475.0 C861.8 477.7 865.7 480.0 869.0 482.0 C872.3 484.0 876.5 486.2 878.0 487.0 M756.0 417.0 C758.3 417.3 764.3 416.5 770.0 419.0 C775.7 421.5 782.5 427.2 790.0 432.0 C797.5 436.8 810.8 445.3 815.0 448.0 M892.0 456.0 C891.2 458.5 889.3 465.8 887.0 471.0 C884.7 476.2 880.7 481.7 878.0 487.0 C875.3 492.3 873.3 497.3 871.0 503.0 C868.7 508.7 865.8 516.3 864.0 521.0 C862.2 525.7 860.7 529.3 860.0 531.0 M1068.0 446.0 C1071.0 447.5 1079.7 450.8 1086.0 455.0 C1092.3 459.2 1099.7 465.3 1106.0 471.0 C1112.3 476.7 1118.7 482.2 1124.0 489.0 C1129.3 495.8 1134.2 505.0 1138.0 512.0 C1141.8 519.0 1145.5 527.8 1147.0 531.0 M1088.0 455.0 C1091.8 453.8 1103.5 450.0 1111.0 448.0 C1118.5 446.0 1124.8 446.0 1133.0 443.0 C1141.2 440.0 1151.0 434.0 1160.0 430.0 C1169.0 426.0 1182.5 420.8 1187.0 419.0 M984.0 466.0 C987.8 465.7 999.5 465.0 1007.0 464.0 C1014.5 463.0 1025.0 463.3 1029.0 460.0 C1033.0 456.7 1032.2 449.3 1031.0 444.0 C1029.8 438.7 1023.8 432.2 1022.0 428.0 C1020.2 423.8 1020.3 420.5 1020.0 419.0 M1133.0 376.0 C1133.0 379.0 1132.2 387.2 1133.0 394.0 C1133.8 400.8 1137.2 413.2 1138.0 417.0 M1185.0 376.0 C1184.7 379.8 1182.7 391.5 1183.0 399.0 C1183.3 406.5 1185.2 411.7 1187.0 421.0 C1188.8 430.3 1192.0 443.7 1194.0 455.0 C1196.0 466.3 1197.5 476.3 1199.0 489.0 C1200.5 501.7 1202.3 524.0 1203.0 531.0 M1309.0 376.0 C1306.0 378.3 1297.3 384.3 1291.0 390.0 C1284.7 395.7 1273.2 405.7 1271.0 410.0 C1268.8 414.3 1272.0 413.2 1278.0 416.0 C1284.0 418.8 1295.3 425.2 1307.0 427.0 C1318.7 428.8 1339.7 425.3 1348.0 427.0 C1356.3 428.7 1355.5 435.3 1357.0 437.0 M1250.0 376.0 C1250.8 378.3 1253.5 384.3 1255.0 390.0 C1256.5 395.7 1255.2 405.7 1259.0 410.0 C1262.8 414.3 1274.5 410.3 1278.0 416.0 C1281.5 421.7 1279.5 434.8 1280.0 444.0 C1280.5 453.2 1280.7 462.0 1281.0 471.0 C1281.3 480.0 1281.3 490.5 1282.0 498.0 C1282.7 505.5 1284.2 510.5 1285.0 516.0 C1285.8 521.5 1286.7 528.5 1287.0 531.0 M1212.0 418.0 C1215.0 418.7 1223.7 420.3 1230.0 422.0 C1236.3 423.7 1244.2 428.3 1250.0 428.0 C1255.8 427.7 1261.5 423.0 1265.0 420.0 C1268.5 417.0 1270.0 411.7 1271.0 410.0 M1440.0 387.0 C1435.2 390.0 1415.8 399.3 1411.0 405.0 C1406.2 410.7 1414.0 413.8 1411.0 421.0 C1408.0 428.2 1396.3 441.2 1393.0 448.0 C1389.7 454.8 1395.2 456.7 1391.0 462.0 C1386.8 467.3 1375.2 473.2 1368.0 480.0 C1360.8 486.8 1356.0 495.8 1348.0 503.0 C1340.0 510.2 1326.8 518.3 1320.0 523.0 C1313.2 527.7 1309.2 529.7 1307.0 531.0 M636.0 531.0 C633.8 532.8 628.5 537.8 623.0 542.0 C617.5 546.2 610.2 551.8 603.0 556.0 C595.8 560.2 588.7 564.2 580.0 567.0 C571.3 569.8 559.7 570.3 551.0 573.0 C542.3 575.7 531.8 581.3 528.0 583.0 M528.0 531.0 C529.5 533.3 533.2 541.8 537.0 545.0 C540.8 548.2 546.5 547.5 551.0 550.0 C555.5 552.5 560.3 557.2 564.0 560.0 C567.7 562.8 571.2 564.0 573.0 567.0 C574.8 570.0 573.2 574.2 575.0 578.0 C576.8 581.8 581.3 585.3 584.0 590.0 C586.7 594.7 590.2 600.0 591.0 606.0 C591.8 612.0 589.3 619.3 589.0 626.0 C588.7 632.7 587.5 640.3 589.0 646.0 C590.5 651.7 596.2 655.8 598.0 660.0 C599.8 664.2 600.3 666.7 600.0 671.0 C599.7 675.3 596.7 683.5 596.0 686.0 M729.0 531.0 C731.7 534.0 740.5 543.3 745.0 549.0 C749.5 554.7 754.2 562.3 756.0 565.0 M926.0 531.0 C925.5 535.5 925.3 549.7 923.0 558.0 C920.7 566.3 915.3 572.0 912.0 581.0 C908.7 590.0 905.7 604.2 903.0 612.0 C900.3 619.8 897.0 621.8 896.0 628.0 C895.0 634.2 895.8 642.5 897.0 649.0 C898.2 655.5 902.0 662.2 903.0 667.0 C904.0 671.8 903.0 676.2 903.0 678.0 M756.0 565.0 C759.8 568.3 772.7 577.5 779.0 585.0 C785.3 592.5 790.0 602.0 794.0 610.0 C798.0 618.0 800.3 627.3 803.0 633.0 C805.7 638.7 808.8 642.2 810.0 644.0 M831.0 610.0 C834.3 611.8 845.8 616.8 851.0 621.0 C856.2 625.2 857.5 632.3 862.0 635.0 C866.5 637.7 874.2 637.8 878.0 637.0 C881.8 636.2 882.0 631.8 885.0 630.0 C888.0 628.2 894.2 626.7 896.0 626.0 M923.0 558.0 C925.3 560.3 931.7 566.7 937.0 572.0 C942.3 577.3 950.2 584.3 955.0 590.0 C959.8 595.7 961.2 600.0 966.0 606.0 C970.8 612.0 981.0 622.7 984.0 626.0 M896.0 628.0 C899.0 629.8 908.0 634.5 914.0 639.0 C920.0 643.5 926.3 650.3 932.0 655.0 C937.7 659.7 942.7 664.0 948.0 667.0 C953.3 670.0 958.0 670.8 964.0 673.0 C970.0 675.2 980.7 678.8 984.0 680.0 M984.0 547.0 C987.8 547.2 999.5 547.3 1007.0 548.0 C1014.5 548.7 1019.7 549.7 1029.0 551.0 C1038.3 552.3 1051.7 554.0 1063.0 556.0 C1074.3 558.0 1089.0 561.3 1097.0 563.0 C1105.0 564.7 1103.8 566.5 1111.0 566.0 C1118.2 565.5 1132.5 563.5 1140.0 560.0 C1147.5 556.5 1151.8 549.8 1156.0 545.0 C1160.2 540.2 1163.5 533.3 1165.0 531.0 M1147.0 531.0 C1149.2 533.3 1154.3 539.7 1160.0 545.0 C1165.7 550.3 1174.2 557.0 1181.0 563.0 C1187.8 569.0 1195.8 576.5 1201.0 581.0 C1206.2 585.5 1210.2 588.5 1212.0 590.0 M1034.0 662.0 C1038.2 662.3 1051.5 664.0 1059.0 664.0 C1066.5 664.0 1070.3 663.5 1079.0 662.0 C1087.7 660.5 1099.3 656.0 1111.0 655.0 C1122.7 654.0 1138.8 657.8 1149.0 656.0 C1159.2 654.2 1165.7 647.8 1172.0 644.0 C1178.3 640.2 1180.3 636.8 1187.0 633.0 C1193.7 629.2 1207.8 623.0 1212.0 621.0 M1282.0 531.0 C1282.0 534.0 1279.0 545.3 1282.0 549.0 C1285.0 552.7 1294.0 551.5 1300.0 553.0 C1306.0 554.5 1312.3 554.2 1318.0 558.0 C1323.7 561.8 1329.0 570.7 1334.0 576.0 C1339.0 581.3 1344.7 584.0 1348.0 590.0 C1351.3 596.0 1352.5 605.3 1354.0 612.0 C1355.5 618.7 1354.7 625.0 1357.0 630.0 C1359.3 635.0 1362.0 636.3 1368.0 642.0 C1374.0 647.7 1387.0 659.2 1393.0 664.0 C1399.0 668.8 1402.2 669.8 1404.0 671.0 M1318.0 558.0 C1323.0 558.3 1337.5 560.7 1348.0 560.0 C1358.5 559.3 1371.3 557.0 1381.0 554.0 C1390.7 551.0 1399.2 544.7 1406.0 542.0 C1412.8 539.3 1416.3 540.0 1422.0 538.0 C1427.7 536.0 1437.0 531.3 1440.0 530.0 M1282.0 549.0 C1281.3 550.5 1281.0 553.8 1278.0 558.0 C1275.0 562.2 1268.2 568.3 1264.0 574.0 C1259.8 579.7 1257.8 587.2 1253.0 592.0 C1248.2 596.8 1241.8 599.7 1235.0 603.0 C1228.2 606.3 1215.8 610.5 1212.0 612.0 M1212.0 626.0 C1213.8 627.5 1220.0 630.2 1223.0 635.0 C1226.0 639.8 1227.7 649.0 1230.0 655.0 C1232.3 661.0 1235.8 668.3 1237.0 671.0 M1080.0 294.0 C1077.8 294.5 1071.2 295.8 1067.0 297.0 C1062.8 298.2 1058.0 299.3 1055.0 301.0 C1052.0 302.7 1050.0 306.0 1049.0 307.0 M1080.0 342.0 C1077.0 342.2 1066.7 341.8 1062.0 343.0 C1057.3 344.2 1055.7 346.8 1052.0 349.0 C1048.3 351.2 1042.0 354.8 1040.0 356.0 M976.0 338.0 C978.5 337.8 985.2 337.0 991.0 337.0 C996.8 337.0 1005.2 338.3 1011.0 338.0 C1016.8 337.7 1021.7 337.2 1026.0 335.0 C1030.3 332.8 1034.7 328.5 1037.0 325.0 C1039.3 321.5 1038.0 317.0 1040.0 314.0 C1042.0 311.0 1047.5 308.2 1049.0 307.0 M1000.0 317.0 C1001.8 316.5 1006.7 314.7 1011.0 314.0 C1015.3 313.3 1021.7 313.0 1026.0 313.0 C1030.3 313.0 1035.2 313.8 1037.0 314.0 M989.0 394.0 C990.8 395.2 996.3 399.5 1000.0 401.0 C1003.7 402.5 1006.7 402.5 1011.0 403.0 C1015.3 403.5 1020.8 403.3 1026.0 404.0 C1031.2 404.7 1037.7 406.0 1042.0 407.0 C1046.3 408.0 1050.3 409.5 1052.0 410.0 M1042.0 404.0 C1044.2 405.0 1048.7 408.5 1055.0 410.0 C1061.3 411.5 1075.8 412.5 1080.0 413.0 M1021.0 417.0 C1021.3 419.0 1022.2 424.7 1023.0 429.0 C1023.8 433.3 1025.0 438.5 1026.0 443.0 C1027.0 447.5 1028.5 453.8 1029.0 456.0 M1040.0 435.0 C1039.5 436.8 1037.7 442.5 1037.0 446.0 C1036.3 449.5 1036.2 454.3 1036.0 456.0 M880.0 368.0 C882.5 369.2 890.0 374.0 895.0 375.0 C900.0 376.0 907.5 374.2 910.0 374.0 M966.0 365.0 C967.5 367.5 971.2 375.2 975.0 380.0 C978.8 384.8 986.7 391.7 989.0 394.0 M911.0 356.0 C914.2 355.3 923.5 353.0 930.0 352.0 C936.5 351.0 942.3 349.3 950.0 350.0 C957.7 350.7 971.7 355.0 976.0 356.0 M944.0 256.0 C945.3 257.0 947.7 261.0 952.0 262.0 C956.3 263.0 963.7 262.7 970.0 262.0 C976.3 261.3 986.7 258.7 990.0 258.0 M1013.0 281.0 C1015.0 281.3 1021.0 282.3 1025.0 283.0 C1029.0 283.7 1035.0 284.7 1037.0 285.0 M970.0 365.0 C972.5 364.5 979.2 362.8 985.0 362.0 C990.8 361.2 997.5 360.7 1005.0 360.0 C1012.5 359.3 1022.8 358.7 1030.0 358.0 C1037.2 357.3 1045.0 356.3 1048.0 356.0 M924.0 292.0 C926.7 293.3 934.3 297.8 940.0 300.0 C945.7 302.2 952.2 302.0 958.0 305.0 C963.8 308.0 969.0 314.0 975.0 318.0 C981.0 322.0 990.8 327.2 994.0 329.0 M905.0 322.0 C908.3 323.0 918.3 326.7 925.0 328.0 C931.7 329.3 938.3 328.3 945.0 330.0 C951.7 331.7 959.8 336.7 965.0 338.0 C970.2 339.3 974.2 338.0 976.0 338.0 M938.0 435.0 C935.8 435.8 929.3 439.5 925.0 440.0 C920.7 440.5 914.2 438.3 912.0 438.0" fill="none" stroke="#28364e" stroke-width="1.8" stroke-linecap="round" stroke-linejoin="round"/>
<path d="M786.0 244.0 C790.0 243.0 802.7 240.0 810.0 238.0 C817.3 236.0 821.3 234.8 830.0 232.0 C838.7 229.2 853.2 225.0 862.0 221.0 C870.8 217.0 876.5 212.3 883.0 208.0 C889.5 203.7 896.2 199.0 901.0 195.0 C905.8 191.0 908.3 189.0 912.0 184.0 C915.7 179.0 917.3 170.0 923.0 165.0 C928.7 160.0 938.5 157.8 946.0 154.0 C953.5 150.2 961.7 145.3 968.0 142.0 C974.3 138.7 979.7 135.7 984.0 134.0 C988.3 132.3 992.3 132.3 994.0 132.0 M994.0 132.0 C996.2 131.0 1001.2 127.7 1007.0 126.0 C1012.8 124.3 1021.5 123.2 1029.0 122.0 C1036.5 120.8 1045.2 120.5 1052.0 119.0 C1058.8 117.5 1064.8 115.2 1070.0 113.0 C1075.2 110.8 1077.8 108.2 1083.0 106.0 C1088.2 103.8 1096.0 101.8 1101.0 100.0 C1106.0 98.2 1109.8 97.7 1113.0 95.0 C1116.2 92.3 1117.3 87.7 1120.0 84.0 C1122.7 80.3 1126.0 76.0 1129.0 73.0 C1132.0 70.0 1136.5 67.2 1138.0 66.0 M1083.0 66.0 C1082.8 68.3 1083.5 75.2 1082.0 80.0 C1080.5 84.8 1075.8 89.5 1074.0 95.0 C1072.2 100.5 1072.5 106.5 1071.0 113.0 C1069.5 119.5 1067.5 127.2 1065.0 134.0 C1062.5 140.8 1058.5 148.0 1056.0 154.0 C1053.5 160.0 1051.8 164.3 1050.0 170.0 C1048.2 175.7 1046.2 182.0 1045.0 188.0 C1043.8 194.0 1044.2 200.5 1043.0 206.0 C1041.8 211.5 1038.8 218.5 1038.0 221.0 M1129.0 73.0 C1129.7 76.3 1132.0 84.8 1133.0 93.0 C1134.0 101.2 1133.8 113.3 1135.0 122.0 C1136.2 130.7 1139.5 137.3 1140.0 145.0 C1140.5 152.7 1139.0 160.5 1138.0 168.0 C1137.0 175.5 1135.0 182.8 1134.0 190.0 C1133.0 197.2 1132.2 205.8 1132.0 211.0 C1131.8 216.2 1132.8 219.3 1133.0 221.0 M984.0 231.0 C979.8 230.5 966.8 227.3 959.0 228.0 C951.2 228.7 943.7 232.0 937.0 235.0 C930.3 238.0 923.2 241.5 919.0 246.0 C914.8 250.5 914.7 256.3 912.0 262.0 C909.3 267.7 905.7 274.3 903.0 280.0 C900.3 285.7 898.7 291.2 896.0 296.0 C893.3 300.8 888.5 306.8 887.0 309.0 M1038.0 221.0 C1036.2 223.7 1030.0 232.5 1027.0 237.0 C1024.0 241.5 1021.5 244.8 1020.0 248.0 C1018.5 251.2 1018.3 254.7 1018.0 256.0 M1020.0 248.0 L1026.0 256.0 M1140.0 221.0 C1140.3 223.3 1140.2 230.5 1142.0 235.0 C1143.8 239.5 1149.2 242.8 1151.0 248.0 C1152.8 253.2 1153.7 260.0 1153.0 266.0 C1152.3 272.0 1151.0 279.0 1147.0 284.0 C1143.0 289.0 1134.0 291.5 1129.0 296.0 C1124.0 300.5 1120.0 305.8 1117.0 311.0 C1114.0 316.2 1112.5 321.7 1111.0 327.0 C1109.5 332.3 1108.5 338.0 1108.0 343.0 C1107.5 348.0 1108.0 354.7 1108.0 357.0 M984.0 357.0 C987.8 355.8 997.7 352.2 1007.0 350.0 C1016.3 347.8 1028.8 345.0 1040.0 344.0 C1051.2 343.0 1064.5 342.3 1074.0 344.0 C1083.5 345.7 1090.8 351.8 1097.0 354.0 C1103.2 356.2 1103.5 357.3 1111.0 357.0 C1118.5 356.7 1131.2 353.0 1142.0 352.0 C1152.8 351.0 1164.3 352.2 1176.0 351.0 C1187.7 349.8 1206.0 346.0 1212.0 345.0 M1440.0 289.0 C1437.0 289.5 1428.0 290.5 1422.0 292.0 C1416.0 293.5 1410.8 295.2 1404.0 298.0 C1397.2 300.8 1388.5 305.3 1381.0 309.0 C1373.5 312.7 1366.8 316.0 1359.0 320.0 C1351.2 324.0 1340.8 329.2 1334.0 333.0 C1327.2 336.8 1323.3 341.0 1318.0 343.0 C1312.7 345.0 1308.3 344.8 1302.0 345.0 C1295.7 345.2 1287.5 345.2 1280.0 344.0 C1272.5 342.8 1264.5 337.8 1257.0 338.0 C1249.5 338.2 1242.5 344.0 1235.0 345.0 C1227.5 346.0 1215.8 344.2 1212.0 344.0 M756.0 473.0 C759.8 471.7 771.5 467.8 779.0 465.0 C786.5 462.2 792.3 458.7 801.0 456.0 C809.7 453.3 823.5 449.2 831.0 449.0 C838.5 448.8 839.7 453.7 846.0 455.0 C852.3 456.3 861.3 456.8 869.0 457.0 C876.7 457.2 884.8 456.3 892.0 456.0 C899.2 455.7 908.7 455.2 912.0 455.0 M921.0 376.0 C921.3 379.8 922.8 392.2 923.0 399.0 C923.2 405.8 923.5 411.8 922.0 417.0 C920.5 422.2 915.7 424.0 914.0 430.0 C912.3 436.0 913.2 446.2 912.0 453.0 C910.8 459.8 909.7 465.0 907.0 471.0 C904.3 477.0 900.0 483.7 896.0 489.0 C892.0 494.3 886.7 498.5 883.0 503.0 C879.3 507.5 877.2 511.3 874.0 516.0 C870.8 520.7 865.7 528.5 864.0 531.0 M968.0 387.0 C966.5 390.0 963.0 399.3 959.0 405.0 C955.0 410.7 947.7 416.0 944.0 421.0 C940.3 426.0 936.7 429.7 937.0 435.0 C937.3 440.3 944.5 447.0 946.0 453.0 C947.5 459.0 947.5 464.2 946.0 471.0 C944.5 477.8 939.3 486.5 937.0 494.0 C934.7 501.5 933.5 509.8 932.0 516.0 C930.5 522.2 928.7 528.5 928.0 531.0 M1052.0 376.0 C1050.8 378.3 1047.0 385.2 1045.0 390.0 C1043.0 394.8 1037.7 400.5 1040.0 405.0 C1042.3 409.5 1055.5 411.7 1059.0 417.0 C1062.5 422.3 1059.5 431.3 1061.0 437.0 C1062.5 442.7 1063.5 446.2 1068.0 451.0 C1072.5 455.8 1081.7 461.5 1088.0 466.0 C1094.3 470.5 1100.7 474.2 1106.0 478.0 C1111.3 481.8 1116.2 483.3 1120.0 489.0 C1123.8 494.7 1126.0 505.0 1129.0 512.0 C1132.0 519.0 1136.5 527.8 1138.0 531.0 M1040.0 405.0 C1043.2 406.2 1052.5 409.7 1059.0 412.0 C1065.5 414.3 1072.7 418.3 1079.0 419.0 C1085.3 419.7 1082.7 416.3 1097.0 416.0 C1111.3 415.7 1150.0 416.2 1165.0 417.0 C1180.0 417.8 1179.2 419.2 1187.0 421.0 C1194.8 422.8 1207.8 426.8 1212.0 428.0 M1212.0 426.0 C1215.8 427.5 1227.5 432.7 1235.0 435.0 C1242.5 437.3 1249.2 439.7 1257.0 440.0 C1264.8 440.3 1273.7 438.7 1282.0 437.0 C1290.3 435.3 1299.8 430.8 1307.0 430.0 C1314.2 429.2 1318.2 429.3 1325.0 432.0 C1331.8 434.7 1338.7 439.8 1348.0 446.0 C1357.3 452.2 1369.8 461.8 1381.0 469.0 C1392.2 476.2 1405.2 483.3 1415.0 489.0 C1424.8 494.7 1435.8 500.7 1440.0 503.0 M874.0 531.0 C872.3 533.3 867.2 540.5 864.0 545.0 C860.8 549.5 858.7 553.2 855.0 558.0 C851.3 562.8 846.5 568.0 842.0 574.0 C837.5 580.0 831.3 586.8 828.0 594.0 C824.7 601.2 823.8 609.5 822.0 617.0 C820.2 624.5 819.0 630.7 817.0 639.0 C815.0 647.3 812.3 659.2 810.0 667.0 C807.7 674.8 804.2 682.8 803.0 686.0 M864.0 531.0 C863.0 534.3 862.8 543.5 858.0 551.0 C853.2 558.5 841.8 568.0 835.0 576.0 C828.2 584.0 820.8 591.5 817.0 599.0 C813.2 606.5 813.5 612.7 812.0 621.0 C810.5 629.3 810.2 638.2 808.0 649.0 C805.8 659.8 800.5 679.8 799.0 686.0 M1031.0 460.0 C1030.7 463.7 1030.5 474.8 1029.0 482.0 C1027.5 489.2 1024.8 494.8 1022.0 503.0 C1019.2 511.2 1014.3 522.5 1012.0 531.0 C1009.7 539.5 1009.5 546.5 1008.0 554.0 C1006.5 561.5 1005.0 568.5 1003.0 576.0 C1001.0 583.5 998.3 592.2 996.0 599.0 C993.7 605.8 991.0 612.5 989.0 617.0 C987.0 621.5 987.0 622.2 984.0 626.0 C981.0 629.8 975.8 635.2 971.0 640.0 C966.2 644.8 958.8 649.8 955.0 655.0 C951.2 660.2 949.5 665.8 948.0 671.0 C946.5 676.2 946.3 683.5 946.0 686.0 M1138.0 531.0 C1140.2 533.7 1145.3 541.3 1151.0 547.0 C1156.7 552.7 1165.2 558.7 1172.0 565.0 C1178.8 571.3 1185.3 579.0 1192.0 585.0 C1198.7 591.0 1208.7 598.3 1212.0 601.0 M1212.0 601.0 C1213.5 602.5 1217.7 605.5 1221.0 610.0 C1224.3 614.5 1229.7 621.5 1232.0 628.0 C1234.3 634.5 1233.5 641.8 1235.0 649.0 C1236.5 656.2 1240.0 667.3 1241.0 671.0 M944.0 256.0 C942.0 257.5 934.7 261.3 932.0 265.0 C929.3 268.7 929.3 273.5 928.0 278.0 C926.7 282.5 926.3 286.7 924.0 292.0 C921.7 297.3 917.2 305.0 914.0 310.0 C910.8 315.0 907.8 317.3 905.0 322.0 C902.2 326.7 896.5 333.5 897.0 338.0 C897.5 342.5 905.7 346.0 908.0 349.0 C910.3 352.0 910.0 352.8 911.0 356.0 C912.0 359.2 912.3 364.7 914.0 368.0 C915.7 371.3 919.8 374.7 921.0 376.0 M1018.0 256.0 C1017.7 258.0 1016.8 263.8 1016.0 268.0 C1015.2 272.2 1014.3 276.7 1013.0 281.0 C1011.7 285.3 1009.3 290.2 1008.0 294.0 C1006.7 297.8 1006.2 300.2 1005.0 304.0 C1003.8 307.8 1002.8 312.8 1001.0 317.0 C999.2 321.2 995.7 325.0 994.0 329.0 C992.3 333.0 993.0 337.7 991.0 341.0 C989.0 344.3 984.5 346.5 982.0 349.0 C979.5 351.5 978.0 353.3 976.0 356.0 C974.0 358.7 971.7 359.3 970.0 365.0 C968.3 370.7 967.3 384.2 966.0 390.0 C964.7 395.8 964.8 396.0 962.0 400.0 C959.2 404.0 952.7 409.8 949.0 414.0 C945.3 418.2 941.8 421.5 940.0 425.0 C938.2 428.5 937.3 431.5 938.0 435.0 C938.7 438.5 942.5 442.5 944.0 446.0 C945.5 449.5 946.5 454.3 947.0 456.0 M1026.0 256.0 C1027.2 258.5 1031.2 266.2 1033.0 271.0 C1034.8 275.8 1035.3 281.0 1037.0 285.0 C1038.7 289.0 1041.0 291.3 1043.0 295.0 C1045.0 298.7 1048.2 302.5 1049.0 307.0 C1049.8 311.5 1048.5 316.8 1048.0 322.0 C1047.5 327.2 1046.0 332.3 1046.0 338.0 C1046.0 343.7 1047.0 349.7 1048.0 356.0 C1049.0 362.3 1051.3 372.7 1052.0 376.0 M927.0 423.0 C929.3 423.2 935.7 424.2 941.0 424.0 C946.3 423.8 954.2 421.7 959.0 422.0 C963.8 422.3 966.2 425.5 970.0 426.0 C973.8 426.5 978.0 424.8 982.0 425.0 C986.0 425.2 989.2 427.0 994.0 427.0 C998.8 427.0 1005.7 426.2 1011.0 425.0 C1016.3 423.8 1021.7 422.3 1026.0 420.0 C1030.3 417.7 1034.3 413.7 1037.0 411.0 C1039.7 408.3 1041.2 405.2 1042.0 404.0" fill="none" stroke="#2c3a52" stroke-width="2.4" stroke-linecap="round" stroke-linejoin="round"/>
<defs><filter id="halo" x="-5%" y="-5%" width="110%" height="110%"><feMorphology in="SourceAlpha" operator="dilate" radius="1.4" result="d"/><feFlood flood-color="#0d162a" flood-opacity="0.9"/><feComposite in2="d" operator="in" result="h"/><feMerge><feMergeNode in="h"/><feMergeNode in="SourceGraphic"/></feMerge></filter></defs>
<g font-family="'Liberation Sans',Arial,sans-serif" filter="url(#halo)">
<text x="974" y="385.1" font-size="19.6" text-anchor="middle" fill="#6d7c97" stroke="#6d7c97" stroke-width="0.55">Johannesburg</text>
<text x="1032" y="82.3" font-size="14.6" text-anchor="middle" fill="#687792" stroke="#687792" stroke-width="0.45">Centurion</text>
<text x="1047" y="201.3" font-size="14.6" text-anchor="middle" fill="#687792" stroke="#687792" stroke-width="0.45">Midrand</text>
<text x="784" y="280.3" font-size="14.6" text-anchor="middle" fill="#687792" stroke="#687792" stroke-width="0.45">Krugersdorp</text>
<text x="1013" y="290.3" font-size="14.6" text-anchor="middle" fill="#687792" stroke="#687792" stroke-width="0.45">Sandton</text>
<text x="878" y="335.3" font-size="14.6" text-anchor="middle" fill="#687792" stroke="#687792" stroke-width="0.45">Roodepoort</text>
<text x="1218" y="338.3" font-size="14.6" text-anchor="middle" fill="#687792" stroke="#687792" stroke-width="0.45">Benoni</text>
<text x="844" y="418.3" font-size="14.6" text-anchor="middle" fill="#687792" stroke="#687792" stroke-width="0.45">Soweto</text>
<text x="1129" y="419.3" font-size="14.6" text-anchor="middle" fill="#687792" stroke="#687792" stroke-width="0.45">Boksburg</text>
<text x="1040" y="478.3" font-size="14.6" text-anchor="middle" fill="#687792" stroke="#687792" stroke-width="0.45">Alberton</text>
<text x="1193" y="455.3" font-size="14.6" text-anchor="middle" fill="#687792" stroke="#687792" stroke-width="0.45">Brakpan</text>
<text x="903" y="689.3" font-size="14.6" text-anchor="middle" fill="#687792" stroke="#687792" stroke-width="0.45">Vereeniging</text>
</g>
<g font-family="'Liberation Sans',Arial,sans-serif" font-size="11.8" fill="#63718c" stroke="#0d162a" stroke-opacity="0.9" stroke-width="2.4" stroke-linejoin="round" style="paint-order:stroke">
<text x="670" y="121.2" text-anchor="middle">Hekpoort</text>
<text x="588" y="147.2" text-anchor="end">anhaarrand</text>
<text x="618" y="213.2" text-anchor="middle">Magaliesburg</text>
<text x="839" y="244.2" text-anchor="middle">Muldersdrift</text>
<text x="897" y="160.2" text-anchor="middle">Lanseria</text>
<text x="964" y="168.2" text-anchor="middle">Diepsloot</text>
<text x="926" y="201.2" text-anchor="middle">Chartwell</text>
<text x="1112" y="225.2" text-anchor="middle">Thembisa</text>
<text x="1246" y="113.2" text-anchor="middle">Tierpoort</text>
<text x="1257" y="150.2" text-anchor="middle">Bashewa</text>
<text x="1187" y="206.2" text-anchor="middle">Elandsfontein AH</text>
<text x="1271" y="211.2" text-anchor="middle">Bapsfontein</text>
<text x="1399" y="228.2" text-anchor="middle">Klipspruit</text>
<text x="698" y="279.2" text-anchor="middle">Wolfelea AH</text>
<text x="672" y="307.2" text-anchor="middle">Avalonia AH</text>
<text x="921" y="289.2" text-anchor="middle">Randburg</text>
<text x="1111" y="287.2" text-anchor="middle">Kempton Park</text>
<text x="1292" y="286.2" text-anchor="middle">Sentrarand</text>
<text x="1079" y="321.2" text-anchor="middle">Edenvale</text>
<text x="1310" y="343.2" text-anchor="middle">Breswol</text>
<text x="1425" y="329.2" text-anchor="start">Delmas</text>
<text x="577" y="350.2" text-anchor="end">Holfontein</text>
<text x="732" y="353.2" text-anchor="middle">Randfontein</text>
<text x="913" y="412.2" text-anchor="middle">Diepkloof</text>
<text x="880" y="432.2" text-anchor="middle">Pimville</text>
<text x="1333" y="418.2" text-anchor="middle">Aston Lake</text>
<text x="1380" y="448.2" text-anchor="middle">Vischkuil</text>
<text x="578" y="481.2" text-anchor="middle">Maizelands</text>
<text x="711" y="492.2" text-anchor="middle">Westonaria</text>
<text x="848" y="484.2" text-anchor="middle">Lenasia</text>
<text x="1059" y="509.2" text-anchor="middle">Katlehong</text>
<text x="551" y="519.2" text-anchor="end">Carletonville</text>
<text x="810" y="530.2" text-anchor="middle">Lawley</text>
<text x="829" y="551.2" text-anchor="middle">Ennerdale</text>
<text x="1223" y="541.2" text-anchor="middle">Spaarwater</text>
<text x="1205" y="560.2" text-anchor="middle">Spaarwater AH</text>
<text x="1299" y="558.2" text-anchor="middle">Nigel</text>
<text x="1252" y="586.2" text-anchor="middle">Nigel</text>
<text x="781" y="592.2" text-anchor="middle">Poortje</text>
<text x="847" y="594.2" text-anchor="middle">Orange Farm</text>
<text x="1120" y="594.2" text-anchor="middle">Diepkloof</text>
<text x="990" y="612.2" text-anchor="middle">Randvaal</text>
<text x="1045" y="626.2" text-anchor="middle">Schoongezicht AH</text>
<text x="583" y="615.2" text-anchor="middle">Fochville</text>
<text x="1203" y="619.2" text-anchor="middle">Heidelberg</text>
<text x="1203" y="631.2" text-anchor="middle">- GP</text>
<text x="1351" y="621.2" text-anchor="middle">Klipfontein</text>
<text x="825" y="648.2" text-anchor="middle">Evaton</text>
<text x="825" y="672.2" text-anchor="middle">Sebokeng</text>
<text x="1105" y="68.7" text-anchor="middle">Lyttelton</text>
</g>
<g font-family="'Liberation Sans',Arial,sans-serif" font-weight="bold" text-anchor="middle" font-size="9.8">
<rect x="811.4" y="61.7" width="17.2" height="12.6" rx="2.8" fill="#2b8d25" stroke="#f0f7e4" stroke-width="1.8"/>
<text x="820" y="71.7" fill="#fbe50f" textLength="10.0" lengthAdjust="spacingAndGlyphs">R3</text>
<rect x="929.0" y="54.0" width="21.9" height="12.6" rx="2.8" fill="#2b8d25" stroke="#f0f7e4" stroke-width="1.8"/>
<text x="940" y="64.0" fill="#fbe50f" textLength="14.7" lengthAdjust="spacingAndGlyphs">R55</text>
<rect x="664.7" y="84.7" width="26.6" height="12.6" rx="2.8" fill="#2b8d25" stroke="#f0f7e4" stroke-width="1.8"/>
<text x="678" y="94.7" fill="#fbe50f" textLength="19.4" lengthAdjust="spacingAndGlyphs">R401</text>
<rect x="700.7" y="85.7" width="26.6" height="12.6" rx="2.8" fill="#2b8d25" stroke="#f0f7e4" stroke-width="1.8"/>
<text x="714" y="95.7" fill="#fbe50f" textLength="19.4" lengthAdjust="spacingAndGlyphs">R560</text>
<rect x="965.2" y="85.7" width="23.6" height="12.6" rx="2.8" fill="#2b8d25" stroke="#f0f7e4" stroke-width="1.8"/>
<text x="977" y="95.7" fill="#fbe50f" textLength="16.4" lengthAdjust="spacingAndGlyphs">M26</text>
<rect x="1026.7" y="99.7" width="26.6" height="12.6" rx="2.8" fill="#2b8d25" stroke="#f0f7e4" stroke-width="1.8"/>
<text x="1040" y="109.7" fill="#fbe50f" textLength="19.4" lengthAdjust="spacingAndGlyphs">R114</text>
<polygon points="1074.0,97.2 1084.8,105.0 1080.9,114.7 1067.1,114.7 1063.2,105.0" fill="#2a79d0" stroke="#f6f9fd" stroke-width="1.6" stroke-linejoin="round"/>
<text x="1074" y="110.6" fill="#fbe50f" font-weight="normal" stroke="#fbe50f" stroke-width="0.3">14</text>
<rect x="1146.0" y="81.7" width="21.9" height="12.6" rx="2.8" fill="#2b8d25" stroke="#f0f7e4" stroke-width="1.8"/>
<text x="1157" y="91.7" fill="#fbe50f" textLength="14.7" lengthAdjust="spacingAndGlyphs">R50</text>
<rect x="1314.7" y="67.7" width="26.6" height="12.6" rx="2.8" fill="#2b8d25" stroke="#f0f7e4" stroke-width="1.8"/>
<text x="1328" y="77.7" fill="#fbe50f" textLength="19.4" lengthAdjust="spacingAndGlyphs">R515</text>
<rect x="1287.7" y="93.7" width="26.6" height="12.6" rx="2.8" fill="#2b8d25" stroke="#f0f7e4" stroke-width="1.8"/>
<text x="1301" y="103.7" fill="#fbe50f" textLength="19.4" lengthAdjust="spacingAndGlyphs">R631</text>
<rect x="1264.5" y="120.7" width="18.9" height="12.6" rx="2.8" fill="#2b8d25" stroke="#f0f7e4" stroke-width="1.8"/>
<text x="1274" y="130.7" fill="#fbe50f" textLength="11.7" lengthAdjust="spacingAndGlyphs">M6</text>
<polygon points="994.0,124.2 1004.8,132.0 1000.9,141.7 987.1,141.7 983.2,132.0" fill="#2a79d0" stroke="#f6f9fd" stroke-width="1.6" stroke-linejoin="round"/>
<text x="994" y="137.6" fill="#fbe50f" font-weight="normal" stroke="#fbe50f" stroke-width="0.3">14</text>
<rect x="861.7" y="135.7" width="26.6" height="12.6" rx="2.8" fill="#2b8d25" stroke="#f0f7e4" stroke-width="1.8"/>
<text x="875" y="145.7" fill="#fbe50f" textLength="19.4" lengthAdjust="spacingAndGlyphs">R512</text>
<rect x="641.0" y="155.7" width="21.9" height="12.6" rx="2.8" fill="#2b8d25" stroke="#f0f7e4" stroke-width="1.8"/>
<text x="652" y="165.7" fill="#fbe50f" textLength="14.7" lengthAdjust="spacingAndGlyphs">R96</text>
<rect x="791.7" y="172.7" width="26.6" height="12.6" rx="2.8" fill="#2b8d25" stroke="#f0f7e4" stroke-width="1.8"/>
<text x="805" y="182.7" fill="#fbe50f" textLength="19.4" lengthAdjust="spacingAndGlyphs">R540</text>
<rect x="841.5" y="183.7" width="18.9" height="12.6" rx="2.8" fill="#2b8d25" stroke="#f0f7e4" stroke-width="1.8"/>
<text x="851" y="193.7" fill="#fbe50f" textLength="11.7" lengthAdjust="spacingAndGlyphs">M5</text>
<polygon points="1048.0,162.2 1058.8,170.0 1054.9,179.7 1041.1,179.7 1037.2,170.0" fill="#2a79d0" stroke="#f6f9fd" stroke-width="1.6" stroke-linejoin="round"/>
<text x="1048" y="175.6" fill="#fbe50f" font-weight="normal" stroke="#fbe50f" stroke-width="0.3">1</text>
<rect x="1078.7" y="169.7" width="26.6" height="12.6" rx="2.8" fill="#2b8d25" stroke="#f0f7e4" stroke-width="1.8"/>
<text x="1092" y="179.7" fill="#fbe50f" textLength="19.4" lengthAdjust="spacingAndGlyphs">R562</text>
<rect x="1124.0" y="171.7" width="21.9" height="12.6" rx="2.8" fill="#2a79d0" stroke="#f0f7e4" stroke-width="1.8"/>
<text x="1135" y="181.7" fill="#fbe50f" textLength="14.7" lengthAdjust="spacingAndGlyphs">R21</text>
<rect x="677.7" y="197.7" width="26.6" height="12.6" rx="2.8" fill="#2b8d25" stroke="#f0f7e4" stroke-width="1.8"/>
<text x="691" y="207.7" fill="#fbe50f" textLength="19.4" lengthAdjust="spacingAndGlyphs">R400</text>
<rect x="722.7" y="208.7" width="26.6" height="12.6" rx="2.8" fill="#2b8d25" stroke="#f0f7e4" stroke-width="1.8"/>
<text x="736" y="218.7" fill="#fbe50f" textLength="19.4" lengthAdjust="spacingAndGlyphs">R563</text>
<rect x="811.7" y="208.7" width="26.6" height="12.6" rx="2.8" fill="#2b8d25" stroke="#f0f7e4" stroke-width="1.8"/>
<text x="825" y="218.7" fill="#fbe50f" textLength="19.4" lengthAdjust="spacingAndGlyphs">R114</text>
<rect x="545.7" y="219.7" width="26.6" height="12.6" rx="2.8" fill="#2b8d25" stroke="#f0f7e4" stroke-width="1.8"/>
<text x="559" y="229.7" fill="#fbe50f" textLength="19.4" lengthAdjust="spacingAndGlyphs">R100</text>
<polygon points="786.0,235.2 796.8,243.0 792.9,252.7 779.1,252.7 775.2,243.0" fill="#2a79d0" stroke="#f6f9fd" stroke-width="1.6" stroke-linejoin="round"/>
<text x="786" y="248.6" fill="#fbe50f" font-weight="normal" stroke="#fbe50f" stroke-width="0.3">14</text>
<rect x="1056.2" y="214.7" width="23.6" height="12.6" rx="2.8" fill="#2b8d25" stroke="#f0f7e4" stroke-width="1.8"/>
<text x="1068" y="224.7" fill="#fbe50f" textLength="16.4" lengthAdjust="spacingAndGlyphs">M38</text>
<rect x="1044.2" y="237.7" width="23.6" height="12.6" rx="2.8" fill="#2b8d25" stroke="#f0f7e4" stroke-width="1.8"/>
<text x="1056" y="247.7" fill="#fbe50f" textLength="16.4" lengthAdjust="spacingAndGlyphs">M39</text>
<rect x="1109.0" y="248.7" width="21.9" height="12.6" rx="2.8" fill="#2b8d25" stroke="#f0f7e4" stroke-width="1.8"/>
<text x="1120" y="258.7" fill="#fbe50f" textLength="14.7" lengthAdjust="spacingAndGlyphs">R25</text>
<rect x="953.2" y="256.7" width="23.6" height="12.6" rx="2.8" fill="#2b8d25" stroke="#f0f7e4" stroke-width="1.8"/>
<text x="965" y="266.7" fill="#fbe50f" textLength="16.4" lengthAdjust="spacingAndGlyphs">M71</text>
<rect x="983.5" y="254.7" width="18.9" height="12.6" rx="2.8" fill="#2b8d25" stroke="#f0f7e4" stroke-width="1.8"/>
<text x="993" y="264.7" fill="#fbe50f" textLength="11.7" lengthAdjust="spacingAndGlyphs">M9</text>
<rect x="1226.0" y="243.7" width="21.9" height="12.6" rx="2.8" fill="#2b8d25" stroke="#f0f7e4" stroke-width="1.8"/>
<text x="1237" y="253.7" fill="#fbe50f" textLength="14.7" lengthAdjust="spacingAndGlyphs">R51</text>
<rect x="1272.0" y="228.7" width="21.9" height="12.6" rx="2.8" fill="#2b8d25" stroke="#f0f7e4" stroke-width="1.8"/>
<text x="1283" y="238.7" fill="#fbe50f" textLength="14.7" lengthAdjust="spacingAndGlyphs">R50</text>
<rect x="838.2" y="272.7" width="23.6" height="12.6" rx="2.8" fill="#2b8d25" stroke="#f0f7e4" stroke-width="1.8"/>
<text x="850" y="282.7" fill="#fbe50f" textLength="16.4" lengthAdjust="spacingAndGlyphs">M47</text>
<rect x="716.0" y="287.7" width="21.9" height="12.6" rx="2.8" fill="#2b8d25" stroke="#f0f7e4" stroke-width="1.8"/>
<text x="727" y="297.7" fill="#fbe50f" textLength="14.7" lengthAdjust="spacingAndGlyphs">R24</text>
<rect x="961.2" y="297.7" width="23.6" height="12.6" rx="2.8" fill="#2b8d25" stroke="#f0f7e4" stroke-width="1.8"/>
<text x="973" y="307.7" fill="#fbe50f" textLength="16.4" lengthAdjust="spacingAndGlyphs">M81</text>
<rect x="1155.0" y="290.7" width="21.9" height="12.6" rx="2.8" fill="#2b8d25" stroke="#f0f7e4" stroke-width="1.8"/>
<text x="1166" y="300.7" fill="#fbe50f" textLength="14.7" lengthAdjust="spacingAndGlyphs">R23</text>
<rect x="1199.2" y="303.7" width="23.6" height="12.6" rx="2.8" fill="#2b8d25" stroke="#f0f7e4" stroke-width="1.8"/>
<text x="1211" y="313.7" fill="#fbe50f" textLength="16.4" lengthAdjust="spacingAndGlyphs">M44</text>
<rect x="868.2" y="304.7" width="23.6" height="12.6" rx="2.8" fill="#2b8d25" stroke="#f0f7e4" stroke-width="1.8"/>
<text x="880" y="314.7" fill="#fbe50f" textLength="16.4" lengthAdjust="spacingAndGlyphs">M47</text>
<rect x="925.5" y="318.7" width="18.9" height="12.6" rx="2.8" fill="#2b8d25" stroke="#f0f7e4" stroke-width="1.8"/>
<text x="935" y="328.7" fill="#fbe50f" textLength="11.7" lengthAdjust="spacingAndGlyphs">M5</text>
<rect x="531.7" y="315.7" width="26.6" height="12.6" rx="2.8" fill="#2b8d25" stroke="#f0f7e4" stroke-width="1.8"/>
<text x="545" y="325.7" fill="#fbe50f" textLength="19.4" lengthAdjust="spacingAndGlyphs">R500</text>
<polygon points="631.0,325.2 641.8,333.0 637.9,342.7 624.1,342.7 620.2,333.0" fill="#2a79d0" stroke="#f6f9fd" stroke-width="1.6" stroke-linejoin="round"/>
<text x="631" y="338.6" fill="#fbe50f" font-weight="normal" stroke="#fbe50f" stroke-width="0.3">14</text>
<polygon points="1087.0,338.2 1097.8,346.0 1093.9,355.7 1080.1,355.7 1076.2,346.0" fill="#2a79d0" stroke="#f6f9fd" stroke-width="1.6" stroke-linejoin="round"/>
<text x="1087" y="351.6" fill="#fbe50f" font-weight="normal" stroke="#fbe50f" stroke-width="0.3">12</text>
<rect x="1108.0" y="343.7" width="21.9" height="12.6" rx="2.8" fill="#2a79d0" stroke="#f0f7e4" stroke-width="1.8"/>
<text x="1119" y="353.7" fill="#fbe50f" textLength="14.7" lengthAdjust="spacingAndGlyphs">R21</text>
<rect x="1383.7" y="338.7" width="26.6" height="12.6" rx="2.8" fill="#2b8d25" stroke="#f0f7e4" stroke-width="1.8"/>
<text x="1397" y="348.7" fill="#fbe50f" textLength="19.4" lengthAdjust="spacingAndGlyphs">R555</text>
<polygon points="1433.0,281.2 1443.8,289.0 1439.9,298.7 1426.1,298.7 1422.2,289.0" fill="#2a79d0" stroke="#f6f9fd" stroke-width="1.6" stroke-linejoin="round"/>
<text x="1433" y="294.6" fill="#fbe50f" font-weight="normal" stroke="#fbe50f" stroke-width="0.3">12</text>
<rect x="772.0" y="346.7" width="21.9" height="12.6" rx="2.8" fill="#2b8d25" stroke="#f0f7e4" stroke-width="1.8"/>
<text x="783" y="356.7" fill="#fbe50f" textLength="14.7" lengthAdjust="spacingAndGlyphs">R41</text>
<rect x="880.0" y="359.7" width="21.9" height="12.6" rx="2.8" fill="#2b8d25" stroke="#f0f7e4" stroke-width="1.8"/>
<text x="891" y="369.7" fill="#fbe50f" textLength="14.7" lengthAdjust="spacingAndGlyphs">R41</text>
<rect x="1066.0" y="362.7" width="21.9" height="12.6" rx="2.8" fill="#2b8d25" stroke="#f0f7e4" stroke-width="1.8"/>
<text x="1077" y="372.7" fill="#fbe50f" textLength="14.7" lengthAdjust="spacingAndGlyphs">R29</text>
<rect x="1203.0" y="364.7" width="21.9" height="12.6" rx="2.8" fill="#2b8d25" stroke="#f0f7e4" stroke-width="1.8"/>
<text x="1214" y="374.7" fill="#fbe50f" textLength="14.7" lengthAdjust="spacingAndGlyphs">R29</text>
<rect x="1234.0" y="367.7" width="21.9" height="12.6" rx="2.8" fill="#2b8d25" stroke="#f0f7e4" stroke-width="1.8"/>
<text x="1245" y="377.7" fill="#fbe50f" textLength="14.7" lengthAdjust="spacingAndGlyphs">R51</text>
<rect x="1145.2" y="373.7" width="23.6" height="12.6" rx="2.8" fill="#2b8d25" stroke="#f0f7e4" stroke-width="1.8"/>
<text x="1157" y="383.7" fill="#fbe50f" textLength="16.4" lengthAdjust="spacingAndGlyphs">M43</text>
<rect x="551.0" y="382.7" width="21.9" height="12.6" rx="2.8" fill="#2b8d25" stroke="#f0f7e4" stroke-width="1.8"/>
<text x="562" y="392.7" fill="#fbe50f" textLength="14.7" lengthAdjust="spacingAndGlyphs">R41</text>
<rect x="713.0" y="383.7" width="21.9" height="12.6" rx="2.8" fill="#2b8d25" stroke="#f0f7e4" stroke-width="1.8"/>
<text x="724" y="393.7" fill="#fbe50f" textLength="14.7" lengthAdjust="spacingAndGlyphs">R28</text>
<rect x="741.7" y="404.7" width="26.6" height="12.6" rx="2.8" fill="#2b8d25" stroke="#f0f7e4" stroke-width="1.8"/>
<text x="755" y="414.7" fill="#fbe50f" textLength="19.4" lengthAdjust="spacingAndGlyphs">R559</text>
<rect x="736.0" y="425.7" width="21.9" height="12.6" rx="2.8" fill="#2b8d25" stroke="#f0f7e4" stroke-width="1.8"/>
<text x="747" y="435.7" fill="#fbe50f" textLength="14.7" lengthAdjust="spacingAndGlyphs">R93</text>
<rect x="905.7" y="425.7" width="26.6" height="12.6" rx="2.8" fill="#2b8d25" stroke="#f0f7e4" stroke-width="1.8"/>
<text x="919" y="435.7" fill="#fbe50f" textLength="19.4" lengthAdjust="spacingAndGlyphs">R553</text>
<polygon points="982.0,422.2 992.8,430.0 988.9,439.7 975.1,439.7 971.2,430.0" fill="#2a79d0" stroke="#f6f9fd" stroke-width="1.6" stroke-linejoin="round"/>
<text x="982" y="435.6" fill="#fbe50f" font-weight="normal" stroke="#fbe50f" stroke-width="0.3">12</text>
<polygon points="1059.0,414.2 1069.8,422.0 1065.9,431.7 1052.1,431.7 1048.2,422.0" fill="#2a79d0" stroke="#f6f9fd" stroke-width="1.6" stroke-linejoin="round"/>
<text x="1059" y="427.6" fill="#fbe50f" font-weight="normal" stroke="#fbe50f" stroke-width="0.3">3</text>
<rect x="1132.7" y="429.7" width="26.6" height="12.6" rx="2.8" fill="#2b8d25" stroke="#f0f7e4" stroke-width="1.8"/>
<text x="1146" y="439.7" fill="#fbe50f" textLength="19.4" lengthAdjust="spacingAndGlyphs">R554</text>
<polygon points="1294.0,424.2 1304.8,432.0 1300.9,441.7 1287.1,441.7 1283.2,432.0" fill="#2a79d0" stroke="#f6f9fd" stroke-width="1.6" stroke-linejoin="round"/>
<text x="1294" y="437.6" fill="#fbe50f" font-weight="normal" stroke="#fbe50f" stroke-width="0.3">17</text>
<polygon points="787.0,454.2 797.8,462.0 793.9,471.7 780.1,471.7 776.2,462.0" fill="#2a79d0" stroke="#f6f9fd" stroke-width="1.6" stroke-linejoin="round"/>
<text x="787" y="467.6" fill="#fbe50f" font-weight="normal" stroke="#fbe50f" stroke-width="0.3">12</text>
<rect x="920.7" y="473.7" width="26.6" height="12.6" rx="2.8" fill="#2b8d25" stroke="#f0f7e4" stroke-width="1.8"/>
<text x="934" y="483.7" fill="#fbe50f" textLength="19.4" lengthAdjust="spacingAndGlyphs">R554</text>
<rect x="819.7" y="500.7" width="26.6" height="12.6" rx="2.8" fill="#2b8d25" stroke="#f0f7e4" stroke-width="1.8"/>
<text x="833" y="510.7" fill="#fbe50f" textLength="19.4" lengthAdjust="spacingAndGlyphs">R558</text>
<rect x="703.0" y="507.7" width="21.9" height="12.6" rx="2.8" fill="#2b8d25" stroke="#f0f7e4" stroke-width="1.8"/>
<text x="714" y="517.7" fill="#fbe50f" textLength="14.7" lengthAdjust="spacingAndGlyphs">R28</text>
<polygon points="880.0,499.2 890.8,507.0 886.9,516.7 873.1,516.7 869.2,507.0" fill="#2a79d0" stroke="#f6f9fd" stroke-width="1.6" stroke-linejoin="round"/>
<text x="880" y="512.6" fill="#fbe50f" font-weight="normal" stroke="#fbe50f" stroke-width="0.3">1</text>
<polygon points="635.0,525.2 645.8,533.0 641.9,542.7 628.1,542.7 624.2,533.0" fill="#2a79d0" stroke="#f6f9fd" stroke-width="1.6" stroke-linejoin="round"/>
<text x="635" y="538.6" fill="#fbe50f" font-weight="normal" stroke="#fbe50f" stroke-width="0.3">12</text>
<rect x="1274.0" y="501.7" width="21.9" height="12.6" rx="2.8" fill="#2b8d25" stroke="#f0f7e4" stroke-width="1.8"/>
<text x="1285" y="511.7" fill="#fbe50f" textLength="14.7" lengthAdjust="spacingAndGlyphs">R51</text>
<rect x="1404.7" y="528.7" width="26.6" height="12.6" rx="2.8" fill="#2b8d25" stroke="#f0f7e4" stroke-width="1.8"/>
<text x="1418" y="538.7" fill="#fbe50f" textLength="19.4" lengthAdjust="spacingAndGlyphs">R550</text>
<polygon points="851.0,555.2 861.8,563.0 857.9,572.7 844.1,572.7 840.2,563.0" fill="#2a79d0" stroke="#f6f9fd" stroke-width="1.6" stroke-linejoin="round"/>
<text x="851" y="568.6" fill="#fbe50f" font-weight="normal" stroke="#fbe50f" stroke-width="0.3">1</text>
<rect x="927.7" y="571.7" width="26.6" height="12.6" rx="2.8" fill="#2b8d25" stroke="#f0f7e4" stroke-width="1.8"/>
<text x="941" y="581.7" fill="#fbe50f" textLength="19.4" lengthAdjust="spacingAndGlyphs">R557</text>
<rect x="990.0" y="571.7" width="21.9" height="12.6" rx="2.8" fill="#2a79d0" stroke="#f0f7e4" stroke-width="1.8"/>
<text x="1001" y="581.7" fill="#fbe50f" textLength="14.7" lengthAdjust="spacingAndGlyphs">R59</text>
<rect x="1110.7" y="559.7" width="26.6" height="12.6" rx="2.8" fill="#2b8d25" stroke="#f0f7e4" stroke-width="1.8"/>
<text x="1124" y="569.7" fill="#fbe50f" textLength="19.4" lengthAdjust="spacingAndGlyphs">R550</text>
<rect x="574.7" y="587.7" width="26.6" height="12.6" rx="2.8" fill="#2b8d25" stroke="#f0f7e4" stroke-width="1.8"/>
<text x="588" y="597.7" fill="#fbe50f" textLength="19.4" lengthAdjust="spacingAndGlyphs">R500</text>
<rect x="886.0" y="643.7" width="21.9" height="12.6" rx="2.8" fill="#2b8d25" stroke="#f0f7e4" stroke-width="1.8"/>
<text x="897" y="653.7" fill="#fbe50f" textLength="14.7" lengthAdjust="spacingAndGlyphs">R82</text>
<rect x="1003.7" y="657.7" width="26.6" height="12.6" rx="2.8" fill="#2b8d25" stroke="#f0f7e4" stroke-width="1.8"/>
<text x="1017" y="667.7" fill="#fbe50f" textLength="19.4" lengthAdjust="spacingAndGlyphs">R551</text>
<rect x="1053.7" y="650.7" width="26.6" height="12.6" rx="2.8" fill="#2b8d25" stroke="#f0f7e4" stroke-width="1.8"/>
<text x="1067" y="660.7" fill="#fbe50f" textLength="19.4" lengthAdjust="spacingAndGlyphs">R557</text>
<rect x="1363.0" y="643.7" width="21.9" height="12.6" rx="2.8" fill="#2b8d25" stroke="#f0f7e4" stroke-width="1.8"/>
<text x="1374" y="653.7" fill="#fbe50f" textLength="14.7" lengthAdjust="spacingAndGlyphs">R51</text>
<rect x="1069.0" y="682.7" width="21.9" height="12.6" rx="2.8" fill="#2b8d25" stroke="#f0f7e4" stroke-width="1.8"/>
<text x="1080" y="692.7" fill="#fbe50f" textLength="14.7" lengthAdjust="spacingAndGlyphs">R54</text>
<rect x="1441.0" y="80.7" width="21.9" height="12.6" rx="2.8" fill="#2b8d25" stroke="#f0f7e4" stroke-width="1.8"/>
<text x="1452" y="90.7" fill="#fbe50f" textLength="14.7" lengthAdjust="spacingAndGlyphs">R25</text>
<rect x="1247.0" y="680.7" width="21.9" height="12.6" rx="2.8" fill="#2b8d25" stroke="#f0f7e4" stroke-width="1.8"/>
<text x="1258" y="690.7" fill="#fbe50f" textLength="14.7" lengthAdjust="spacingAndGlyphs">R42</text>
</g>
</svg>
<div class="abs" style="left:0;top:16px;width:20px;height:40px;background:#1e293b;border:1px solid #313e54;border-left:none;border-radius:0 4px 4px 0"></div>
<svg class="abs" style="left:4.6px;top:30.8px;fill:none;stroke:#8796ad;stroke-width:2.8;stroke-linecap:round;stroke-linejoin:round" width="10.6" height="10.6" viewBox="0 0 24 24"><path d="m15 18-6-6 6-6"/></svg>
<div class="abs" style="left:840px;top:12px;width:60px;height:30px;border-radius:15px;background:#080d20;border:1px solid #1e293b"></div>
<div class="abs" style="left:853px;top:24px;width:6px;height:6px;border-radius:3px;background:#0ccb58"></div>
<div class="abs" style="left:865px;top:19px;font-size:12px;line-height:16px;color:#b0bbcc">Live</div>
<div class="abs" style="left:862px;top:514px;width:40px;height:81px;background:#fff;border-radius:1px"></div>
<div class="abs" style="left:867px;top:554px;width:30px;height:1px;background:#e6e6e6"></div>
<svg class="abs" style="left:862px;top:514px" width="40" height="81" viewBox="0 0 40 81"><path d="M11.5 20h17M20 11.5v17M11.5 61h17" stroke="#666" stroke-width="2" fill="none"/></svg>
<div class="abs" style="left:9px;top:594px;font-family:'Liberation Sans',Arial,sans-serif;font-size:18.5px;line-height:22px;color:#fff;letter-spacing:-.4px;-webkit-text-stroke:.4px #fff">Google</div>
<div class="gm" style="left:517px;width:97px">Keyboard shortcuts</div>
<div class="gm" style="left:616px;width:160px">Map data ©2026 AfriGIS (Pty) Ltd</div>
<div class="gm" style="left:777px;width:40px">Terms</div>
<div class="gm" style="left:818px;width:93px">Report a map error</div>
</div>
</div></div>
</div>
</body>
</html>
